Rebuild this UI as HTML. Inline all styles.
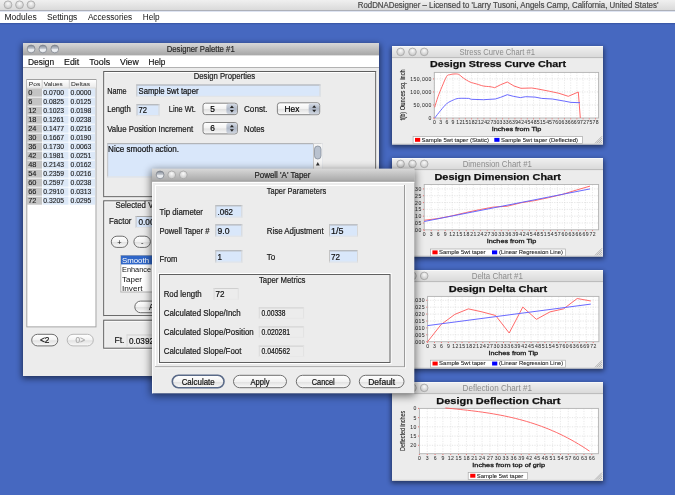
<!DOCTYPE html>
<html><head><meta charset="utf-8"><style>
html,body{margin:0;padding:0;background:#4668c0;overflow:hidden}
svg{display:block;will-change:transform}
text{font-family:"Liberation Sans",sans-serif}
</style></head><body>
<svg width="675" height="495" viewBox="0 0 675 495">
<defs>
<linearGradient id="tbA" x1="0" y1="0" x2="0" y2="1"><stop offset="0" stop-color="#d8d8d8"/><stop offset="1" stop-color="#a9a9a9"/></linearGradient>
<linearGradient id="tbI" x1="0" y1="0" x2="0" y2="1"><stop offset="0" stop-color="#f0f0f0"/><stop offset="1" stop-color="#d9d9d9"/></linearGradient>
<linearGradient id="btn" x1="0" y1="0" x2="0" y2="1"><stop offset="0" stop-color="#ffffff"/><stop offset="0.5" stop-color="#f2f2f2"/><stop offset="0.55" stop-color="#e2e2e2"/><stop offset="1" stop-color="#fafafa"/></linearGradient>
<linearGradient id="hdr" x1="0" y1="0" x2="0" y2="1"><stop offset="0" stop-color="#ffffff"/><stop offset="1" stop-color="#e8e8e8"/></linearGradient>
<radialGradient id="tl" cx="0.5" cy="0.35" r="0.6"><stop offset="0" stop-color="#fafafa"/><stop offset="1" stop-color="#c8c8c8"/></radialGradient>
<radialGradient id="tlG" cx="0.5" cy="0.3" r="0.65"><stop offset="0" stop-color="#f4f6fa"/><stop offset="0.6" stop-color="#aab2c0"/><stop offset="1" stop-color="#7a8394"/></radialGradient>
<linearGradient id="arr" x1="0" y1="0" x2="0" y2="1"><stop offset="0" stop-color="#d6dce6"/><stop offset="0.5" stop-color="#aeb7c6"/><stop offset="1" stop-color="#d0d6e0"/></linearGradient>
<filter id="blur6" x="-20%" y="-20%" width="140%" height="140%"><feGaussianBlur stdDeviation="3"/></filter>
<filter id="blur8" x="-20%" y="-20%" width="140%" height="140%"><feGaussianBlur stdDeviation="4"/></filter>
<filter id="blur5" x="-20%" y="-20%" width="140%" height="140%"><feGaussianBlur stdDeviation="2.5"/></filter>
<linearGradient id="tlA" x1="0" y1="0" x2="0" y2="1"><stop offset="0" stop-color="#7c8491"/><stop offset="0.45" stop-color="#c3c8cf"/><stop offset="0.6" stop-color="#f0f2f5"/><stop offset="1" stop-color="#dde1e6"/></linearGradient>
<linearGradient id="shL" x1="1" y1="0" x2="0" y2="0"><stop offset="0" stop-color="#000" stop-opacity="0.35"/><stop offset="1" stop-color="#000" stop-opacity="0"/></linearGradient>
<linearGradient id="shR" x1="0" y1="0" x2="1" y2="0"><stop offset="0" stop-color="#000" stop-opacity="0.35"/><stop offset="1" stop-color="#000" stop-opacity="0"/></linearGradient>
<linearGradient id="shB" x1="0" y1="0" x2="0" y2="1"><stop offset="0" stop-color="#000" stop-opacity="0.35"/><stop offset="1" stop-color="#000" stop-opacity="0"/></linearGradient>
<linearGradient id="shT" x1="0" y1="1" x2="0" y2="0"><stop offset="0" stop-color="#000" stop-opacity="0.25"/><stop offset="1" stop-color="#000" stop-opacity="0"/></linearGradient>
</defs>
<rect x="0" y="0" width="675" height="495" fill="#4668c0" />
<rect x="0" y="0" width="675" height="10.5" fill="url(#tbI)" />
<line x1="0" y1="10.7" x2="675" y2="10.7" stroke="#b4b4b4" stroke-width="1" />
<rect x="0" y="11.2" width="675" height="11.8" fill="#ffffff" />
<rect x="0" y="23" width="675" height="1.2" fill="#3a58a8" />
<circle cx="8" cy="4.8" r="3.9" fill="url(#tl)" stroke="#a4a4a4" stroke-width="0.8"/>
<circle cx="19.5" cy="4.8" r="3.9" fill="url(#tl)" stroke="#a4a4a4" stroke-width="0.8"/>
<circle cx="31" cy="4.8" r="3.9" fill="url(#tl)" stroke="#a4a4a4" stroke-width="0.8"/>
<text x="357.7" y="8.2" font-size="8.3" fill="#4a4a4a" textLength="300.7" lengthAdjust="spacingAndGlyphs"  stroke="#4a4a4a" stroke-width="0.2">RodDNADesigner – Licensed to &#39;Larry Tusoni, Angels Camp, California, United States&#39;</text>
<text x="4.5" y="19.8" font-size="8.3" fill="#111" textLength="32.3" lengthAdjust="spacingAndGlyphs" >Modules</text>
<text x="46.9" y="19.8" font-size="8.3" fill="#111" textLength="30.4" lengthAdjust="spacingAndGlyphs" >Settings</text>
<text x="87.9" y="19.8" font-size="8.3" fill="#111" textLength="44.3" lengthAdjust="spacingAndGlyphs" >Accessories</text>
<text x="142.8" y="19.8" font-size="8.3" fill="#111" textLength="16.9" lengthAdjust="spacingAndGlyphs" >Help</text>
<rect x="22" y="44.5" width="358" height="334" fill="#000" opacity="0.55" filter="url(#blur6)"/>
<rect x="23" y="43" width="356" height="333" fill="#ececec" />
<rect x="23" y="43" width="356" height="11.5" fill="url(#tbA)" />
<line x1="23" y1="55" x2="379" y2="55" stroke="#8a8a8a" stroke-width="1" />
<rect x="23" y="55.5" width="356" height="11.5" fill="#ffffff" />
<line x1="23" y1="67.5" x2="379" y2="67.5" stroke="#b2b2b2" stroke-width="1" />
<circle cx="31.1" cy="49" r="3.9" fill="url(#tlA)" stroke="#7d838c" stroke-width="0.8"/>
<circle cx="42.9" cy="49" r="3.9" fill="url(#tlA)" stroke="#7d838c" stroke-width="0.8"/>
<circle cx="54.8" cy="49" r="3.9" fill="url(#tlA)" stroke="#7d838c" stroke-width="0.8"/>
<text x="166.7" y="52.1" font-size="8.3" fill="#2a2a2a" textLength="68" lengthAdjust="spacingAndGlyphs"  stroke="#2a2a2a" stroke-width="0.2">Designer Palette #1</text>
<text x="28" y="64.6" font-size="8.5" fill="#111" textLength="26.1" lengthAdjust="spacingAndGlyphs"  stroke="#111" stroke-width="0.15">Design</text>
<text x="64" y="64.6" font-size="8.5" fill="#111" textLength="15.2" lengthAdjust="spacingAndGlyphs"  stroke="#111" stroke-width="0.15">Edit</text>
<text x="89.3" y="64.6" font-size="8.5" fill="#111" textLength="20.8" lengthAdjust="spacingAndGlyphs"  stroke="#111" stroke-width="0.15">Tools</text>
<text x="120" y="64.6" font-size="8.5" fill="#111" textLength="18.7" lengthAdjust="spacingAndGlyphs"  stroke="#111" stroke-width="0.15">View</text>
<text x="148.5" y="64.6" font-size="8.5" fill="#111" textLength="16.8" lengthAdjust="spacingAndGlyphs"  stroke="#111" stroke-width="0.15">Help</text>
<rect x="26.3" y="79" width="70.2" height="248.4" fill="#ffffff" />
<rect x="26.8" y="79.5" width="69.2" height="247.4" fill="none" stroke="#a0a0a0"/>
<rect x="27" y="80" width="69" height="8.3" fill="url(#hdr)" />
<line x1="42.2" y1="80" x2="42.2" y2="88.3" stroke="#cfcfcf" stroke-width="1" />
<line x1="69.3" y1="80" x2="69.3" y2="88.3" stroke="#cfcfcf" stroke-width="1" />
<line x1="27" y1="88.2" x2="96" y2="88.2" stroke="#d4d4d4" stroke-width="1" />
<text x="28.8" y="86.2" font-size="6.0" fill="#222" textLength="11.5" lengthAdjust="spacingAndGlyphs" >Pos</text>
<text x="43.8" y="86.2" font-size="6.0" fill="#222" textLength="19" lengthAdjust="spacingAndGlyphs" >Values</text>
<text x="71" y="86.2" font-size="6.0" fill="#222" textLength="19" lengthAdjust="spacingAndGlyphs" >Deltas</text>
<rect x="27" y="88.6" width="15" height="8.1" fill="#c4c4c4" />
<rect x="42.6" y="88.6" width="26" height="8.1" fill="#dce8f7" />
<rect x="69.6" y="88.6" width="25.6" height="8.1" fill="#dce8f7" />
<text x="28.2" y="95.39999999999999" font-size="7.4" fill="#1a1a1a" stroke="#1a1a1a" stroke-width="0.12">0</text>
<text x="43.3" y="95.39999999999999" font-size="7.4" fill="#1a1a1a" textLength="20.8" lengthAdjust="spacingAndGlyphs" stroke="#1a1a1a" stroke-width="0.12">0.0700</text>
<text x="70.6" y="95.39999999999999" font-size="7.4" fill="#1a1a1a" textLength="20.8" lengthAdjust="spacingAndGlyphs" stroke="#1a1a1a" stroke-width="0.12">0.0000</text>
<rect x="27" y="97.6" width="15" height="8.1" fill="#c4c4c4" />
<rect x="42.6" y="97.6" width="26" height="8.1" fill="#dce8f7" />
<rect x="69.6" y="97.6" width="25.6" height="8.1" fill="#dce8f7" />
<text x="28.2" y="104.39999999999999" font-size="7.4" fill="#1a1a1a" stroke="#1a1a1a" stroke-width="0.12">6</text>
<text x="43.3" y="104.39999999999999" font-size="7.4" fill="#1a1a1a" textLength="20.8" lengthAdjust="spacingAndGlyphs" stroke="#1a1a1a" stroke-width="0.12">0.0825</text>
<text x="70.6" y="104.39999999999999" font-size="7.4" fill="#1a1a1a" textLength="20.8" lengthAdjust="spacingAndGlyphs" stroke="#1a1a1a" stroke-width="0.12">0.0125</text>
<rect x="27" y="106.6" width="15" height="8.1" fill="#c4c4c4" />
<rect x="42.6" y="106.6" width="26" height="8.1" fill="#dce8f7" />
<rect x="69.6" y="106.6" width="25.6" height="8.1" fill="#dce8f7" />
<text x="28.2" y="113.39999999999999" font-size="7.4" fill="#1a1a1a" stroke="#1a1a1a" stroke-width="0.12">12</text>
<text x="43.3" y="113.39999999999999" font-size="7.4" fill="#1a1a1a" textLength="20.8" lengthAdjust="spacingAndGlyphs" stroke="#1a1a1a" stroke-width="0.12">0.1023</text>
<text x="70.6" y="113.39999999999999" font-size="7.4" fill="#1a1a1a" textLength="20.8" lengthAdjust="spacingAndGlyphs" stroke="#1a1a1a" stroke-width="0.12">0.0198</text>
<rect x="27" y="115.6" width="15" height="8.1" fill="#c4c4c4" />
<rect x="42.6" y="115.6" width="26" height="8.1" fill="#dce8f7" />
<rect x="69.6" y="115.6" width="25.6" height="8.1" fill="#dce8f7" />
<text x="28.2" y="122.39999999999999" font-size="7.4" fill="#1a1a1a" stroke="#1a1a1a" stroke-width="0.12">18</text>
<text x="43.3" y="122.39999999999999" font-size="7.4" fill="#1a1a1a" textLength="20.8" lengthAdjust="spacingAndGlyphs" stroke="#1a1a1a" stroke-width="0.12">0.1261</text>
<text x="70.6" y="122.39999999999999" font-size="7.4" fill="#1a1a1a" textLength="20.8" lengthAdjust="spacingAndGlyphs" stroke="#1a1a1a" stroke-width="0.12">0.0238</text>
<rect x="27" y="124.6" width="15" height="8.1" fill="#c4c4c4" />
<rect x="42.6" y="124.6" width="26" height="8.1" fill="#dce8f7" />
<rect x="69.6" y="124.6" width="25.6" height="8.1" fill="#dce8f7" />
<text x="28.2" y="131.4" font-size="7.4" fill="#1a1a1a" stroke="#1a1a1a" stroke-width="0.12">24</text>
<text x="43.3" y="131.4" font-size="7.4" fill="#1a1a1a" textLength="20.8" lengthAdjust="spacingAndGlyphs" stroke="#1a1a1a" stroke-width="0.12">0.1477</text>
<text x="70.6" y="131.4" font-size="7.4" fill="#1a1a1a" textLength="20.8" lengthAdjust="spacingAndGlyphs" stroke="#1a1a1a" stroke-width="0.12">0.0216</text>
<rect x="27" y="133.6" width="15" height="8.1" fill="#c4c4c4" />
<rect x="42.6" y="133.6" width="26" height="8.1" fill="#dce8f7" />
<rect x="69.6" y="133.6" width="25.6" height="8.1" fill="#dce8f7" />
<text x="28.2" y="140.4" font-size="7.4" fill="#1a1a1a" stroke="#1a1a1a" stroke-width="0.12">30</text>
<text x="43.3" y="140.4" font-size="7.4" fill="#1a1a1a" textLength="20.8" lengthAdjust="spacingAndGlyphs" stroke="#1a1a1a" stroke-width="0.12">0.1667</text>
<text x="70.6" y="140.4" font-size="7.4" fill="#1a1a1a" textLength="20.8" lengthAdjust="spacingAndGlyphs" stroke="#1a1a1a" stroke-width="0.12">0.0190</text>
<rect x="27" y="142.6" width="15" height="8.1" fill="#c4c4c4" />
<rect x="42.6" y="142.6" width="26" height="8.1" fill="#dce8f7" />
<rect x="69.6" y="142.6" width="25.6" height="8.1" fill="#dce8f7" />
<text x="28.2" y="149.4" font-size="7.4" fill="#1a1a1a" stroke="#1a1a1a" stroke-width="0.12">36</text>
<text x="43.3" y="149.4" font-size="7.4" fill="#1a1a1a" textLength="20.8" lengthAdjust="spacingAndGlyphs" stroke="#1a1a1a" stroke-width="0.12">0.1730</text>
<text x="70.6" y="149.4" font-size="7.4" fill="#1a1a1a" textLength="20.8" lengthAdjust="spacingAndGlyphs" stroke="#1a1a1a" stroke-width="0.12">0.0063</text>
<rect x="27" y="151.6" width="15" height="8.1" fill="#c4c4c4" />
<rect x="42.6" y="151.6" width="26" height="8.1" fill="#dce8f7" />
<rect x="69.6" y="151.6" width="25.6" height="8.1" fill="#dce8f7" />
<text x="28.2" y="158.4" font-size="7.4" fill="#1a1a1a" stroke="#1a1a1a" stroke-width="0.12">42</text>
<text x="43.3" y="158.4" font-size="7.4" fill="#1a1a1a" textLength="20.8" lengthAdjust="spacingAndGlyphs" stroke="#1a1a1a" stroke-width="0.12">0.1981</text>
<text x="70.6" y="158.4" font-size="7.4" fill="#1a1a1a" textLength="20.8" lengthAdjust="spacingAndGlyphs" stroke="#1a1a1a" stroke-width="0.12">0.0251</text>
<rect x="27" y="160.6" width="15" height="8.1" fill="#c4c4c4" />
<rect x="42.6" y="160.6" width="26" height="8.1" fill="#dce8f7" />
<rect x="69.6" y="160.6" width="25.6" height="8.1" fill="#dce8f7" />
<text x="28.2" y="167.4" font-size="7.4" fill="#1a1a1a" stroke="#1a1a1a" stroke-width="0.12">48</text>
<text x="43.3" y="167.4" font-size="7.4" fill="#1a1a1a" textLength="20.8" lengthAdjust="spacingAndGlyphs" stroke="#1a1a1a" stroke-width="0.12">0.2143</text>
<text x="70.6" y="167.4" font-size="7.4" fill="#1a1a1a" textLength="20.8" lengthAdjust="spacingAndGlyphs" stroke="#1a1a1a" stroke-width="0.12">0.0162</text>
<rect x="27" y="169.6" width="15" height="8.1" fill="#c4c4c4" />
<rect x="42.6" y="169.6" width="26" height="8.1" fill="#dce8f7" />
<rect x="69.6" y="169.6" width="25.6" height="8.1" fill="#dce8f7" />
<text x="28.2" y="176.4" font-size="7.4" fill="#1a1a1a" stroke="#1a1a1a" stroke-width="0.12">54</text>
<text x="43.3" y="176.4" font-size="7.4" fill="#1a1a1a" textLength="20.8" lengthAdjust="spacingAndGlyphs" stroke="#1a1a1a" stroke-width="0.12">0.2359</text>
<text x="70.6" y="176.4" font-size="7.4" fill="#1a1a1a" textLength="20.8" lengthAdjust="spacingAndGlyphs" stroke="#1a1a1a" stroke-width="0.12">0.0216</text>
<rect x="27" y="178.6" width="15" height="8.1" fill="#c4c4c4" />
<rect x="42.6" y="178.6" width="26" height="8.1" fill="#dce8f7" />
<rect x="69.6" y="178.6" width="25.6" height="8.1" fill="#dce8f7" />
<text x="28.2" y="185.4" font-size="7.4" fill="#1a1a1a" stroke="#1a1a1a" stroke-width="0.12">60</text>
<text x="43.3" y="185.4" font-size="7.4" fill="#1a1a1a" textLength="20.8" lengthAdjust="spacingAndGlyphs" stroke="#1a1a1a" stroke-width="0.12">0.2597</text>
<text x="70.6" y="185.4" font-size="7.4" fill="#1a1a1a" textLength="20.8" lengthAdjust="spacingAndGlyphs" stroke="#1a1a1a" stroke-width="0.12">0.0238</text>
<rect x="27" y="187.6" width="15" height="8.1" fill="#c4c4c4" />
<rect x="42.6" y="187.6" width="26" height="8.1" fill="#dce8f7" />
<rect x="69.6" y="187.6" width="25.6" height="8.1" fill="#dce8f7" />
<text x="28.2" y="194.4" font-size="7.4" fill="#1a1a1a" stroke="#1a1a1a" stroke-width="0.12">66</text>
<text x="43.3" y="194.4" font-size="7.4" fill="#1a1a1a" textLength="20.8" lengthAdjust="spacingAndGlyphs" stroke="#1a1a1a" stroke-width="0.12">0.2910</text>
<text x="70.6" y="194.4" font-size="7.4" fill="#1a1a1a" textLength="20.8" lengthAdjust="spacingAndGlyphs" stroke="#1a1a1a" stroke-width="0.12">0.0313</text>
<rect x="27" y="196.6" width="15" height="8.1" fill="#c4c4c4" />
<rect x="42.6" y="196.6" width="26" height="8.1" fill="#dce8f7" />
<rect x="69.6" y="196.6" width="25.6" height="8.1" fill="#dce8f7" />
<text x="28.2" y="203.4" font-size="7.4" fill="#1a1a1a" stroke="#1a1a1a" stroke-width="0.12">72</text>
<text x="43.3" y="203.4" font-size="7.4" fill="#1a1a1a" textLength="20.8" lengthAdjust="spacingAndGlyphs" stroke="#1a1a1a" stroke-width="0.12">0.3205</text>
<text x="70.6" y="203.4" font-size="7.4" fill="#1a1a1a" textLength="20.8" lengthAdjust="spacingAndGlyphs" stroke="#1a1a1a" stroke-width="0.12">0.0295</text>
<rect x="31.7" y="334.3" width="26.1" height="11.6" rx="5.8" fill="url(#btn)" stroke="#6e6e6e" stroke-width="1"/>
<text x="44.75" y="343.3" font-size="8.3" text-anchor="middle" fill="#111"  stroke="#111" stroke-width="0.2">&lt;2</text>
<rect x="67.2" y="334.3" width="26.1" height="11.6" rx="5.8" fill="url(#btn)" stroke="#b8b8b8" stroke-width="1"/>
<text x="80.25" y="343.3" font-size="8.3" text-anchor="middle" fill="#aaaaaa"  stroke="#aaaaaa" stroke-width="0.2">0&gt;</text>
<rect x="104.7" y="72.5" width="272" height="125.2" fill="none" stroke="#ffffff" stroke-width="1"/>
<rect x="103.7" y="71.5" width="272" height="125.2" fill="none" stroke="#5e5e5e" stroke-width="1"/>
<text x="193.7" y="79.3" font-size="8.3" fill="#222" textLength="61.5" lengthAdjust="spacingAndGlyphs"  stroke="#222" stroke-width="0.2">Design Properties</text>
<text x="107.2" y="93.8" font-size="8.3" fill="#1a1a1a" textLength="19.5" lengthAdjust="spacingAndGlyphs"  stroke="#1a1a1a" stroke-width="0.2">Name</text>
<rect x="136.3" y="84.5" width="184.2" height="12.3" fill="#d9e7fa" />
<line x1="136.3" y1="85.0" x2="320.5" y2="85.0" stroke="#a8a8a8" stroke-width="1" />
<line x1="136.8" y1="84.5" x2="136.8" y2="96.8" stroke="#c4c4c4" stroke-width="1" />
<line x1="320.0" y1="84.5" x2="320.0" y2="96.8" stroke="#d8d8d8" stroke-width="1" />
<line x1="136.3" y1="96.3" x2="320.5" y2="96.3" stroke="#e4e4e4" stroke-width="1" />
<text x="138.5" y="93.8" font-size="8.3" fill="#111" textLength="60" lengthAdjust="spacingAndGlyphs"  stroke="#111" stroke-width="0.2">Sample 5wt taper</text>
<text x="107.2" y="112.3" font-size="8.3" fill="#1a1a1a" textLength="23.5" lengthAdjust="spacingAndGlyphs"  stroke="#1a1a1a" stroke-width="0.2">Length</text>
<rect x="136.5" y="104.3" width="23" height="11.8" fill="#d9e7fa" />
<line x1="136.5" y1="104.8" x2="159.5" y2="104.8" stroke="#a8a8a8" stroke-width="1" />
<line x1="137.0" y1="104.3" x2="137.0" y2="116.1" stroke="#c4c4c4" stroke-width="1" />
<line x1="159.0" y1="104.3" x2="159.0" y2="116.1" stroke="#d8d8d8" stroke-width="1" />
<line x1="136.5" y1="115.6" x2="159.5" y2="115.6" stroke="#e4e4e4" stroke-width="1" />
<text x="138.5" y="113.3" font-size="8.3" fill="#111" textLength="8.5" lengthAdjust="spacingAndGlyphs"  stroke="#111" stroke-width="0.2">72</text>
<text x="168.8" y="112.3" font-size="8.3" fill="#1a1a1a" textLength="27" lengthAdjust="spacingAndGlyphs"  stroke="#1a1a1a" stroke-width="0.2">Line Wt.</text>
<rect x="203" y="103.2" width="34.4" height="11.4" rx="2.5" fill="url(#btn)" stroke="#777" stroke-width="0.9"/>
<rect x="226.4" y="103.7" width="10.5" height="10.4" rx="2" fill="url(#arr)"/>
<path d="M229.9 107.9 L233.9 107.9 L231.9 105.4 Z M229.9 109.9 L233.9 109.9 L231.9 112.4 Z" fill="#222"/>
<text x="210.2" y="111.9" font-size="8.3" fill="#000"  stroke="#000" stroke-width="0.2">5</text>
<text x="244" y="112.3" font-size="8.3" fill="#1a1a1a" textLength="23.5" lengthAdjust="spacingAndGlyphs"  stroke="#1a1a1a" stroke-width="0.2">Const.</text>
<rect x="277.4" y="102.8" width="42.3" height="11.9" rx="2.5" fill="url(#btn)" stroke="#777" stroke-width="0.9"/>
<rect x="308.7" y="103.3" width="10.5" height="10.9" rx="2" fill="url(#arr)"/>
<path d="M312.2 107.75 L316.2 107.75 L314.2 105.25 Z M312.2 109.75 L316.2 109.75 L314.2 112.25 Z" fill="#222"/>
<text x="284.59999999999997" y="111.75" font-size="8.3" fill="#000"  stroke="#000" stroke-width="0.2">Hex</text>
<text x="107.2" y="131.5" font-size="8.3" fill="#1a1a1a" textLength="86" lengthAdjust="spacingAndGlyphs"  stroke="#1a1a1a" stroke-width="0.2">Value Position Increment</text>
<rect x="203" y="122.5" width="34.4" height="11.4" rx="2.5" fill="url(#btn)" stroke="#777" stroke-width="0.9"/>
<rect x="226.4" y="123.0" width="10.5" height="10.4" rx="2" fill="url(#arr)"/>
<path d="M229.9 127.19999999999999 L233.9 127.19999999999999 L231.9 124.69999999999999 Z M229.9 129.2 L233.9 129.2 L231.9 131.7 Z" fill="#222"/>
<text x="210.2" y="131.2" font-size="8.3" fill="#000"  stroke="#000" stroke-width="0.2">6</text>
<text x="244" y="131.5" font-size="8.3" fill="#1a1a1a" textLength="20.5" lengthAdjust="spacingAndGlyphs"  stroke="#1a1a1a" stroke-width="0.2">Notes</text>
<rect x="107.2" y="143.2" width="215" height="34.2" fill="#d9e7fa" />
<line x1="107.2" y1="143.7" x2="322.2" y2="143.7" stroke="#a8a8a8" stroke-width="1" />
<line x1="107.7" y1="143.2" x2="107.7" y2="177.39999999999998" stroke="#c4c4c4" stroke-width="1" />
<line x1="321.7" y1="143.2" x2="321.7" y2="177.39999999999998" stroke="#d8d8d8" stroke-width="1" />
<line x1="107.2" y1="176.89999999999998" x2="322.2" y2="176.89999999999998" stroke="#e4e4e4" stroke-width="1" />
<text x="108.1" y="152.2" font-size="8.3" fill="#111" textLength="70.8" lengthAdjust="spacingAndGlyphs"  stroke="#111" stroke-width="0.2">Nice smooth action.</text>
<rect x="313" y="143.5" width="9" height="33" fill="#f4f4f4" />
<line x1="313.5" y1="143.5" x2="313.5" y2="177" stroke="#c8c8c8" stroke-width="1" />
<rect x="314.5" y="146" width="6.5" height="13" rx="3.2" fill="#b9c2cf" stroke="#7d8592" stroke-width="0.7"/>
<path d="M315.9 165.5 L319.7 165.5 L317.8 162 Z" fill="#333"/>
<rect x="104.7" y="201.8" width="103" height="114.8" fill="none" stroke="#ffffff" stroke-width="1"/>
<rect x="103.7" y="200.8" width="103" height="114.8" fill="none" stroke="#5e5e5e" stroke-width="1"/>
<text x="115.5" y="207.9" font-size="8.3" fill="#222" textLength="56" lengthAdjust="spacingAndGlyphs"  stroke="#222" stroke-width="0.2">Selected Values</text>
<text x="109" y="223.8" font-size="8.3" fill="#1a1a1a" textLength="22.5" lengthAdjust="spacingAndGlyphs"  stroke="#1a1a1a" stroke-width="0.2">Factor</text>
<rect x="135.6" y="216" width="40" height="12" fill="#d9e7fa" />
<line x1="135.6" y1="216.5" x2="175.6" y2="216.5" stroke="#a8a8a8" stroke-width="1" />
<line x1="136.1" y1="216" x2="136.1" y2="228" stroke="#c4c4c4" stroke-width="1" />
<line x1="175.1" y1="216" x2="175.1" y2="228" stroke="#d8d8d8" stroke-width="1" />
<line x1="135.6" y1="227.5" x2="175.6" y2="227.5" stroke="#e4e4e4" stroke-width="1" />
<text x="138.5" y="225" font-size="8.3" fill="#111" textLength="16" lengthAdjust="spacingAndGlyphs"  stroke="#111" stroke-width="0.2">0.00</text>
<rect x="111.3" y="236.2" width="16.5" height="11.2" rx="5.6" fill="url(#btn)" stroke="#6e6e6e" stroke-width="1"/>
<text x="119.55" y="244.79999999999998" font-size="7.5" text-anchor="middle" fill="#111" >+</text>
<rect x="133.9" y="236.2" width="16.5" height="11.2" rx="5.6" fill="url(#btn)" stroke="#6e6e6e" stroke-width="1"/>
<text x="142.15" y="244.79999999999998" font-size="7.5" text-anchor="middle" fill="#111" >-</text>
<rect x="120.3" y="255" width="40" height="37" fill="#ffffff" />
<rect x="120.8" y="255.5" width="39" height="36.5" fill="none" stroke="#b0b0b0" stroke-width="1"/>
<rect x="121" y="255.6" width="38" height="8.8" fill="#2f66c8" />
<text x="122" y="262.8" font-size="7.8" fill="#ffffff" textLength="27" lengthAdjust="spacingAndGlyphs" >Smooth</text>
<text x="122" y="272.2" font-size="7.8" fill="#111" textLength="29" lengthAdjust="spacingAndGlyphs" >Enhance</text>
<text x="122" y="281.7" font-size="7.8" fill="#111" textLength="20" lengthAdjust="spacingAndGlyphs" >Taper</text>
<text x="122" y="291.1" font-size="7.8" fill="#111" textLength="20.5" lengthAdjust="spacingAndGlyphs" >Invert</text>
<rect x="134.8" y="301.1" width="47.4" height="11.6" rx="5.8" fill="url(#btn)" stroke="#6e6e6e" stroke-width="1"/>
<text x="158.5" y="310.1" font-size="8.3" text-anchor="middle" fill="#111" textLength="19" lengthAdjust="spacingAndGlyphs"  stroke="#111" stroke-width="0.2">Apply</text>
<rect x="104.7" y="321.2" width="103" height="28" fill="none" stroke="#ffffff" stroke-width="1"/>
<rect x="103.7" y="320.2" width="103" height="28" fill="none" stroke="#5e5e5e" stroke-width="1"/>
<text x="114.5" y="343.2" font-size="8.3" fill="#1a1a1a" textLength="10" lengthAdjust="spacingAndGlyphs"  stroke="#1a1a1a" stroke-width="0.2">Ft.</text>
<rect x="126.6" y="334.5" width="45" height="12.5" fill="#ececec" />
<line x1="126.6" y1="335.0" x2="171.6" y2="335.0" stroke="#cfcfcf" stroke-width="1" />
<line x1="127.1" y1="334.5" x2="127.1" y2="347.0" stroke="#dadada" stroke-width="1" />
<line x1="171.1" y1="334.5" x2="171.1" y2="347.0" stroke="#e2e2e2" stroke-width="1" />
<line x1="126.6" y1="346.5" x2="171.6" y2="346.5" stroke="#e8e8e8" stroke-width="1" />
<text x="129" y="344" font-size="8.3" fill="#111" textLength="25" lengthAdjust="spacingAndGlyphs"  stroke="#111" stroke-width="0.2">0.0392</text>
<rect x="391" y="47.5" width="213" height="99.5" fill="#000" opacity="0.49500000000000005" filter="url(#blur5)"/>
<rect x="392" y="46" width="211" height="98.5" fill="#ececec" />
<rect x="392" y="46" width="211" height="11.5" fill="url(#tbI)" />
<line x1="392" y1="46.5" x2="603" y2="46.5" stroke="#f8f8f8" stroke-width="1" />
<line x1="392" y1="57.6" x2="603" y2="57.6" stroke="#b9b9b9" stroke-width="1" />
<circle cx="400.6" cy="51.9" r="3.8" fill="url(#tl)" stroke="#a4a4a4" stroke-width="0.8"/>
<circle cx="412.5" cy="51.9" r="3.8" fill="url(#tl)" stroke="#a4a4a4" stroke-width="0.8"/>
<circle cx="424.2" cy="51.9" r="3.8" fill="url(#tl)" stroke="#a4a4a4" stroke-width="0.8"/>
<text x="497.3" y="54.7" font-size="8.2" text-anchor="middle" fill="#8c8c8c" textLength="75.6" lengthAdjust="spacingAndGlyphs" >Stress Curve Chart #1</text>
<line x1="600.2" y1="143.5" x2="602" y2="141.7" stroke="#8c8c8c" stroke-width="0.6" />
<line x1="598.4" y1="143.5" x2="602" y2="139.9" stroke="#8c8c8c" stroke-width="0.6" />
<line x1="596.6" y1="143.5" x2="602" y2="138.1" stroke="#8c8c8c" stroke-width="0.6" />
<line x1="594.8" y1="143.5" x2="602" y2="136.3" stroke="#8c8c8c" stroke-width="0.6" />
<line x1="392" y1="144.0" x2="603" y2="144.0" stroke="#d0d0d0" stroke-width="1" />
<text x="430" y="67.4" font-size="9.0" font-weight="bold" fill="#111" textLength="136" lengthAdjust="spacingAndGlyphs" stroke="#111" stroke-width="0.25">Design Stress Curve Chart</text>
<rect x="434.3" y="72.4" width="164.3" height="45.599999999999994" fill="#ffffff" />
<line x1="434.4" y1="72.4" x2="434.4" y2="118" stroke="#dcdcdc" stroke-width="0.6" stroke-dasharray="1.2,1.3"/>
<line x1="440.59499999999997" y1="72.4" x2="440.59499999999997" y2="118" stroke="#dcdcdc" stroke-width="0.6" stroke-dasharray="1.2,1.3"/>
<line x1="446.78999999999996" y1="72.4" x2="446.78999999999996" y2="118" stroke="#dcdcdc" stroke-width="0.6" stroke-dasharray="1.2,1.3"/>
<line x1="452.98499999999996" y1="72.4" x2="452.98499999999996" y2="118" stroke="#dcdcdc" stroke-width="0.6" stroke-dasharray="1.2,1.3"/>
<line x1="459.17999999999995" y1="72.4" x2="459.17999999999995" y2="118" stroke="#dcdcdc" stroke-width="0.6" stroke-dasharray="1.2,1.3"/>
<line x1="465.375" y1="72.4" x2="465.375" y2="118" stroke="#dcdcdc" stroke-width="0.6" stroke-dasharray="1.2,1.3"/>
<line x1="471.57" y1="72.4" x2="471.57" y2="118" stroke="#dcdcdc" stroke-width="0.6" stroke-dasharray="1.2,1.3"/>
<line x1="477.765" y1="72.4" x2="477.765" y2="118" stroke="#dcdcdc" stroke-width="0.6" stroke-dasharray="1.2,1.3"/>
<line x1="483.96" y1="72.4" x2="483.96" y2="118" stroke="#dcdcdc" stroke-width="0.6" stroke-dasharray="1.2,1.3"/>
<line x1="490.155" y1="72.4" x2="490.155" y2="118" stroke="#dcdcdc" stroke-width="0.6" stroke-dasharray="1.2,1.3"/>
<line x1="496.34999999999997" y1="72.4" x2="496.34999999999997" y2="118" stroke="#dcdcdc" stroke-width="0.6" stroke-dasharray="1.2,1.3"/>
<line x1="502.54499999999996" y1="72.4" x2="502.54499999999996" y2="118" stroke="#dcdcdc" stroke-width="0.6" stroke-dasharray="1.2,1.3"/>
<line x1="508.74" y1="72.4" x2="508.74" y2="118" stroke="#dcdcdc" stroke-width="0.6" stroke-dasharray="1.2,1.3"/>
<line x1="514.935" y1="72.4" x2="514.935" y2="118" stroke="#dcdcdc" stroke-width="0.6" stroke-dasharray="1.2,1.3"/>
<line x1="521.13" y1="72.4" x2="521.13" y2="118" stroke="#dcdcdc" stroke-width="0.6" stroke-dasharray="1.2,1.3"/>
<line x1="527.3249999999999" y1="72.4" x2="527.3249999999999" y2="118" stroke="#dcdcdc" stroke-width="0.6" stroke-dasharray="1.2,1.3"/>
<line x1="533.52" y1="72.4" x2="533.52" y2="118" stroke="#dcdcdc" stroke-width="0.6" stroke-dasharray="1.2,1.3"/>
<line x1="539.7149999999999" y1="72.4" x2="539.7149999999999" y2="118" stroke="#dcdcdc" stroke-width="0.6" stroke-dasharray="1.2,1.3"/>
<line x1="545.91" y1="72.4" x2="545.91" y2="118" stroke="#dcdcdc" stroke-width="0.6" stroke-dasharray="1.2,1.3"/>
<line x1="552.105" y1="72.4" x2="552.105" y2="118" stroke="#dcdcdc" stroke-width="0.6" stroke-dasharray="1.2,1.3"/>
<line x1="558.3" y1="72.4" x2="558.3" y2="118" stroke="#dcdcdc" stroke-width="0.6" stroke-dasharray="1.2,1.3"/>
<line x1="564.495" y1="72.4" x2="564.495" y2="118" stroke="#dcdcdc" stroke-width="0.6" stroke-dasharray="1.2,1.3"/>
<line x1="570.6899999999999" y1="72.4" x2="570.6899999999999" y2="118" stroke="#dcdcdc" stroke-width="0.6" stroke-dasharray="1.2,1.3"/>
<line x1="576.885" y1="72.4" x2="576.885" y2="118" stroke="#dcdcdc" stroke-width="0.6" stroke-dasharray="1.2,1.3"/>
<line x1="583.0799999999999" y1="72.4" x2="583.0799999999999" y2="118" stroke="#dcdcdc" stroke-width="0.6" stroke-dasharray="1.2,1.3"/>
<line x1="589.275" y1="72.4" x2="589.275" y2="118" stroke="#dcdcdc" stroke-width="0.6" stroke-dasharray="1.2,1.3"/>
<line x1="595.47" y1="72.4" x2="595.47" y2="118" stroke="#dcdcdc" stroke-width="0.6" stroke-dasharray="1.2,1.3"/>
<line x1="434.3" y1="104.97" x2="598.6" y2="104.97" stroke="#d4d4d4" stroke-width="0.6" stroke-dasharray="1.2,1.3"/>
<line x1="434.3" y1="91.94" x2="598.6" y2="91.94" stroke="#d4d4d4" stroke-width="0.6" stroke-dasharray="1.2,1.3"/>
<line x1="434.3" y1="78.91" x2="598.6" y2="78.91" stroke="#d4d4d4" stroke-width="0.6" stroke-dasharray="1.2,1.3"/>
<rect x="434.3" y="72.4" width="164.3" height="45.599999999999994" fill="none" stroke="#b2b2b2" stroke-width="0.9"/>
<line x1="434.4" y1="118.4" x2="434.4" y2="119.3" stroke="#e86a6a" stroke-width="1" />
<text x="434.65" y="123.9" font-size="5.1" text-anchor="middle" fill="#333" stroke="#333" stroke-width="0.05" letter-spacing="0.45">0</text>
<line x1="440.59499999999997" y1="118.4" x2="440.59499999999997" y2="119.3" stroke="#e86a6a" stroke-width="1" />
<text x="440.84499999999997" y="123.9" font-size="5.1" text-anchor="middle" fill="#333" stroke="#333" stroke-width="0.05" letter-spacing="0.45">3</text>
<line x1="446.78999999999996" y1="118.4" x2="446.78999999999996" y2="119.3" stroke="#e86a6a" stroke-width="1" />
<text x="447.03999999999996" y="123.9" font-size="5.1" text-anchor="middle" fill="#333" stroke="#333" stroke-width="0.05" letter-spacing="0.45">6</text>
<line x1="452.98499999999996" y1="118.4" x2="452.98499999999996" y2="119.3" stroke="#e86a6a" stroke-width="1" />
<text x="453.23499999999996" y="123.9" font-size="5.1" text-anchor="middle" fill="#333" stroke="#333" stroke-width="0.05" letter-spacing="0.45">9</text>
<line x1="459.17999999999995" y1="118.4" x2="459.17999999999995" y2="119.3" stroke="#e86a6a" stroke-width="1" />
<text x="459.42999999999995" y="123.9" font-size="5.1" text-anchor="middle" fill="#333" stroke="#333" stroke-width="0.05" letter-spacing="0.45">12</text>
<line x1="465.375" y1="118.4" x2="465.375" y2="119.3" stroke="#e86a6a" stroke-width="1" />
<text x="465.625" y="123.9" font-size="5.1" text-anchor="middle" fill="#333" stroke="#333" stroke-width="0.05" letter-spacing="0.45">15</text>
<line x1="471.57" y1="118.4" x2="471.57" y2="119.3" stroke="#e86a6a" stroke-width="1" />
<text x="471.82" y="123.9" font-size="5.1" text-anchor="middle" fill="#333" stroke="#333" stroke-width="0.05" letter-spacing="0.45">18</text>
<line x1="477.765" y1="118.4" x2="477.765" y2="119.3" stroke="#e86a6a" stroke-width="1" />
<text x="478.015" y="123.9" font-size="5.1" text-anchor="middle" fill="#333" stroke="#333" stroke-width="0.05" letter-spacing="0.45">21</text>
<line x1="483.96" y1="118.4" x2="483.96" y2="119.3" stroke="#e86a6a" stroke-width="1" />
<text x="484.21" y="123.9" font-size="5.1" text-anchor="middle" fill="#333" stroke="#333" stroke-width="0.05" letter-spacing="0.45">24</text>
<line x1="490.155" y1="118.4" x2="490.155" y2="119.3" stroke="#e86a6a" stroke-width="1" />
<text x="490.405" y="123.9" font-size="5.1" text-anchor="middle" fill="#333" stroke="#333" stroke-width="0.05" letter-spacing="0.45">27</text>
<line x1="496.34999999999997" y1="118.4" x2="496.34999999999997" y2="119.3" stroke="#e86a6a" stroke-width="1" />
<text x="496.59999999999997" y="123.9" font-size="5.1" text-anchor="middle" fill="#333" stroke="#333" stroke-width="0.05" letter-spacing="0.45">30</text>
<line x1="502.54499999999996" y1="118.4" x2="502.54499999999996" y2="119.3" stroke="#e86a6a" stroke-width="1" />
<text x="502.79499999999996" y="123.9" font-size="5.1" text-anchor="middle" fill="#333" stroke="#333" stroke-width="0.05" letter-spacing="0.45">33</text>
<line x1="508.74" y1="118.4" x2="508.74" y2="119.3" stroke="#e86a6a" stroke-width="1" />
<text x="508.99" y="123.9" font-size="5.1" text-anchor="middle" fill="#333" stroke="#333" stroke-width="0.05" letter-spacing="0.45">36</text>
<line x1="514.935" y1="118.4" x2="514.935" y2="119.3" stroke="#e86a6a" stroke-width="1" />
<text x="515.185" y="123.9" font-size="5.1" text-anchor="middle" fill="#333" stroke="#333" stroke-width="0.05" letter-spacing="0.45">39</text>
<line x1="521.13" y1="118.4" x2="521.13" y2="119.3" stroke="#e86a6a" stroke-width="1" />
<text x="521.38" y="123.9" font-size="5.1" text-anchor="middle" fill="#333" stroke="#333" stroke-width="0.05" letter-spacing="0.45">42</text>
<line x1="527.3249999999999" y1="118.4" x2="527.3249999999999" y2="119.3" stroke="#e86a6a" stroke-width="1" />
<text x="527.5749999999999" y="123.9" font-size="5.1" text-anchor="middle" fill="#333" stroke="#333" stroke-width="0.05" letter-spacing="0.45">45</text>
<line x1="533.52" y1="118.4" x2="533.52" y2="119.3" stroke="#e86a6a" stroke-width="1" />
<text x="533.77" y="123.9" font-size="5.1" text-anchor="middle" fill="#333" stroke="#333" stroke-width="0.05" letter-spacing="0.45">48</text>
<line x1="539.7149999999999" y1="118.4" x2="539.7149999999999" y2="119.3" stroke="#e86a6a" stroke-width="1" />
<text x="539.9649999999999" y="123.9" font-size="5.1" text-anchor="middle" fill="#333" stroke="#333" stroke-width="0.05" letter-spacing="0.45">51</text>
<line x1="545.91" y1="118.4" x2="545.91" y2="119.3" stroke="#e86a6a" stroke-width="1" />
<text x="546.16" y="123.9" font-size="5.1" text-anchor="middle" fill="#333" stroke="#333" stroke-width="0.05" letter-spacing="0.45">54</text>
<line x1="552.105" y1="118.4" x2="552.105" y2="119.3" stroke="#e86a6a" stroke-width="1" />
<text x="552.355" y="123.9" font-size="5.1" text-anchor="middle" fill="#333" stroke="#333" stroke-width="0.05" letter-spacing="0.45">57</text>
<line x1="558.3" y1="118.4" x2="558.3" y2="119.3" stroke="#e86a6a" stroke-width="1" />
<text x="558.55" y="123.9" font-size="5.1" text-anchor="middle" fill="#333" stroke="#333" stroke-width="0.05" letter-spacing="0.45">60</text>
<line x1="564.495" y1="118.4" x2="564.495" y2="119.3" stroke="#e86a6a" stroke-width="1" />
<text x="564.745" y="123.9" font-size="5.1" text-anchor="middle" fill="#333" stroke="#333" stroke-width="0.05" letter-spacing="0.45">63</text>
<line x1="570.6899999999999" y1="118.4" x2="570.6899999999999" y2="119.3" stroke="#e86a6a" stroke-width="1" />
<text x="570.9399999999999" y="123.9" font-size="5.1" text-anchor="middle" fill="#333" stroke="#333" stroke-width="0.05" letter-spacing="0.45">66</text>
<line x1="576.885" y1="118.4" x2="576.885" y2="119.3" stroke="#e86a6a" stroke-width="1" />
<text x="577.135" y="123.9" font-size="5.1" text-anchor="middle" fill="#333" stroke="#333" stroke-width="0.05" letter-spacing="0.45">69</text>
<line x1="583.0799999999999" y1="118.4" x2="583.0799999999999" y2="119.3" stroke="#e86a6a" stroke-width="1" />
<text x="583.3299999999999" y="123.9" font-size="5.1" text-anchor="middle" fill="#333" stroke="#333" stroke-width="0.05" letter-spacing="0.45">72</text>
<line x1="589.275" y1="118.4" x2="589.275" y2="119.3" stroke="#e86a6a" stroke-width="1" />
<text x="589.525" y="123.9" font-size="5.1" text-anchor="middle" fill="#333" stroke="#333" stroke-width="0.05" letter-spacing="0.45">75</text>
<line x1="595.47" y1="118.4" x2="595.47" y2="119.3" stroke="#e86a6a" stroke-width="1" />
<text x="595.72" y="123.9" font-size="5.1" text-anchor="middle" fill="#333" stroke="#333" stroke-width="0.05" letter-spacing="0.45">78</text>
<line x1="433.0" y1="118.0" x2="433.90000000000003" y2="118.0" stroke="#e86a6a" stroke-width="1" />
<text x="431.8" y="120.0" font-size="5.1" text-anchor="end" fill="#333" stroke="#333" stroke-width="0.05" letter-spacing="0.45">0</text>
<line x1="433.0" y1="104.97" x2="433.90000000000003" y2="104.97" stroke="#e86a6a" stroke-width="1" />
<text x="431.8" y="106.97" font-size="5.1" text-anchor="end" fill="#333" stroke="#333" stroke-width="0.05" letter-spacing="0.45">50,000</text>
<line x1="433.0" y1="91.94" x2="433.90000000000003" y2="91.94" stroke="#e86a6a" stroke-width="1" />
<text x="431.8" y="93.94" font-size="5.1" text-anchor="end" fill="#333" stroke="#333" stroke-width="0.05" letter-spacing="0.45">100,000</text>
<line x1="433.0" y1="78.91" x2="433.90000000000003" y2="78.91" stroke="#e86a6a" stroke-width="1" />
<text x="431.8" y="80.91" font-size="5.1" text-anchor="end" fill="#333" stroke="#333" stroke-width="0.05" letter-spacing="0.45">150,000</text>
<polyline points="434.70,107.30 435.28,105.38 436.10,102.63 437.05,99.56 438.00,96.70 438.93,94.17 439.91,91.69 440.93,89.21 442.00,86.70 443.16,83.92 444.39,80.97 445.61,78.29 446.70,76.30 447.61,75.26 448.39,74.89 449.16,74.83 450.00,74.70 450.93,74.44 451.91,74.23 452.93,74.08 454.00,74.00 455.13,73.95 456.31,73.93 457.52,74.05 458.70,74.40 459.81,75.07 460.87,75.98 462.00,77.00 463.30,78.00 464.83,79.02 466.52,80.10 468.28,81.13 470.00,82.00 471.68,82.64 473.36,83.12 475.03,83.55 476.70,84.00 478.35,84.53 480.00,85.08 481.65,85.59 483.30,86.00 485.01,86.26 486.77,86.41 488.46,86.53 490.00,86.70 491.43,86.95 492.77,87.24 493.90,87.51 494.70,87.70 500.70,84.70 507.30,82.00 514.00,86.00 521.00,88.30 531.70,88.00 536.30,88.70 549.70,91.30 559.00,93.30 568.30,96.30 578.30,92.00 580.30,118.00" fill="none" stroke="#ff6262" stroke-width="0.95" stroke-linejoin="round"/>
<polyline points="434.70,118.00 435.78,116.61 437.32,114.62 439.06,112.41 440.70,110.40 442.19,108.59 443.66,106.81 445.16,105.14 446.70,103.70 448.34,102.51 450.04,101.53 451.72,100.71 453.30,100.00 454.63,99.41 455.79,98.97 457.05,98.64 458.70,98.40 461.11,98.29 464.04,98.30 466.80,98.36 468.70,98.40 471.30,99.30 483.30,99.70 495.30,99.00 500.70,97.30 507.30,94.70 513.30,96.30 520.30,97.60 525.70,96.70 535.00,97.10 541.70,98.40 552.30,99.00 564.30,101.10 571.00,102.40 580.00,102.70" fill="none" stroke="#6262ff" stroke-width="0.95" stroke-linejoin="round"/>
<text x="404.8" y="94.8" font-size="7.2" fill="#222" stroke="#222" stroke-width="0.1" text-anchor="middle" transform="rotate(-90 404.8 94.8)" textLength="51" lengthAdjust="spacingAndGlyphs">f(b) Ounces sq. inch</text>
<text x="491.7" y="131" font-size="5.8" fill="#222" textLength="49.6" lengthAdjust="spacingAndGlyphs" stroke="#222" stroke-width="0.3">Inches from Tip</text>
<rect x="413.1" y="136.5" width="169.4" height="7" fill="#ffffff" stroke="#a8a8a8" stroke-width="0.7" />
<rect x="415" y="137.9" width="5.2" height="3.9" fill="#ff0000" />
<text x="421.5" y="141.6" font-size="5.4" fill="#222" textLength="67.4" lengthAdjust="spacingAndGlyphs" stroke="#222" stroke-width="0.08">Sample 5wt taper (Static)</text>
<rect x="494.3" y="137.9" width="5.2" height="3.9" fill="#0000ff" />
<text x="501.0" y="141.6" font-size="5.4" fill="#222" textLength="77" lengthAdjust="spacingAndGlyphs" stroke="#222" stroke-width="0.08">Sample 5wt taper (Deflected)</text>
<rect x="391" y="159.5" width="213" height="99.5" fill="#000" opacity="0.49500000000000005" filter="url(#blur5)"/>
<rect x="392" y="158" width="211" height="98.5" fill="#ececec" />
<rect x="392" y="158" width="211" height="11.5" fill="url(#tbI)" />
<line x1="392" y1="158.5" x2="603" y2="158.5" stroke="#f8f8f8" stroke-width="1" />
<line x1="392" y1="169.6" x2="603" y2="169.6" stroke="#b9b9b9" stroke-width="1" />
<circle cx="400.6" cy="163.9" r="3.8" fill="url(#tl)" stroke="#a4a4a4" stroke-width="0.8"/>
<circle cx="412.5" cy="163.9" r="3.8" fill="url(#tl)" stroke="#a4a4a4" stroke-width="0.8"/>
<circle cx="424.2" cy="163.9" r="3.8" fill="url(#tl)" stroke="#a4a4a4" stroke-width="0.8"/>
<text x="497.3" y="166.7" font-size="8.2" text-anchor="middle" fill="#8c8c8c" textLength="69.3" lengthAdjust="spacingAndGlyphs" >Dimension Chart #1</text>
<line x1="600.2" y1="255.5" x2="602" y2="253.7" stroke="#8c8c8c" stroke-width="0.6" />
<line x1="598.4" y1="255.5" x2="602" y2="251.9" stroke="#8c8c8c" stroke-width="0.6" />
<line x1="596.6" y1="255.5" x2="602" y2="250.1" stroke="#8c8c8c" stroke-width="0.6" />
<line x1="594.8" y1="255.5" x2="602" y2="248.3" stroke="#8c8c8c" stroke-width="0.6" />
<line x1="392" y1="256.0" x2="603" y2="256.0" stroke="#d0d0d0" stroke-width="1" />
<text x="434.5" y="179.7" font-size="9.0" font-weight="bold" fill="#111" textLength="126.5" lengthAdjust="spacingAndGlyphs" stroke="#111" stroke-width="0.25">Design Dimension Chart</text>
<rect x="424.2" y="184.5" width="174.40000000000003" height="45.30000000000001" fill="#ffffff" />
<line x1="431.214" y1="184.5" x2="431.214" y2="229.8" stroke="#dcdcdc" stroke-width="0.6" stroke-dasharray="1.2,1.3"/>
<line x1="438.228" y1="184.5" x2="438.228" y2="229.8" stroke="#dcdcdc" stroke-width="0.6" stroke-dasharray="1.2,1.3"/>
<line x1="445.24199999999996" y1="184.5" x2="445.24199999999996" y2="229.8" stroke="#dcdcdc" stroke-width="0.6" stroke-dasharray="1.2,1.3"/>
<line x1="452.256" y1="184.5" x2="452.256" y2="229.8" stroke="#dcdcdc" stroke-width="0.6" stroke-dasharray="1.2,1.3"/>
<line x1="459.27" y1="184.5" x2="459.27" y2="229.8" stroke="#dcdcdc" stroke-width="0.6" stroke-dasharray="1.2,1.3"/>
<line x1="466.284" y1="184.5" x2="466.284" y2="229.8" stroke="#dcdcdc" stroke-width="0.6" stroke-dasharray="1.2,1.3"/>
<line x1="473.298" y1="184.5" x2="473.298" y2="229.8" stroke="#dcdcdc" stroke-width="0.6" stroke-dasharray="1.2,1.3"/>
<line x1="480.312" y1="184.5" x2="480.312" y2="229.8" stroke="#dcdcdc" stroke-width="0.6" stroke-dasharray="1.2,1.3"/>
<line x1="487.326" y1="184.5" x2="487.326" y2="229.8" stroke="#dcdcdc" stroke-width="0.6" stroke-dasharray="1.2,1.3"/>
<line x1="494.34" y1="184.5" x2="494.34" y2="229.8" stroke="#dcdcdc" stroke-width="0.6" stroke-dasharray="1.2,1.3"/>
<line x1="501.354" y1="184.5" x2="501.354" y2="229.8" stroke="#dcdcdc" stroke-width="0.6" stroke-dasharray="1.2,1.3"/>
<line x1="508.368" y1="184.5" x2="508.368" y2="229.8" stroke="#dcdcdc" stroke-width="0.6" stroke-dasharray="1.2,1.3"/>
<line x1="515.382" y1="184.5" x2="515.382" y2="229.8" stroke="#dcdcdc" stroke-width="0.6" stroke-dasharray="1.2,1.3"/>
<line x1="522.396" y1="184.5" x2="522.396" y2="229.8" stroke="#dcdcdc" stroke-width="0.6" stroke-dasharray="1.2,1.3"/>
<line x1="529.41" y1="184.5" x2="529.41" y2="229.8" stroke="#dcdcdc" stroke-width="0.6" stroke-dasharray="1.2,1.3"/>
<line x1="536.424" y1="184.5" x2="536.424" y2="229.8" stroke="#dcdcdc" stroke-width="0.6" stroke-dasharray="1.2,1.3"/>
<line x1="543.438" y1="184.5" x2="543.438" y2="229.8" stroke="#dcdcdc" stroke-width="0.6" stroke-dasharray="1.2,1.3"/>
<line x1="550.452" y1="184.5" x2="550.452" y2="229.8" stroke="#dcdcdc" stroke-width="0.6" stroke-dasharray="1.2,1.3"/>
<line x1="557.466" y1="184.5" x2="557.466" y2="229.8" stroke="#dcdcdc" stroke-width="0.6" stroke-dasharray="1.2,1.3"/>
<line x1="564.48" y1="184.5" x2="564.48" y2="229.8" stroke="#dcdcdc" stroke-width="0.6" stroke-dasharray="1.2,1.3"/>
<line x1="571.494" y1="184.5" x2="571.494" y2="229.8" stroke="#dcdcdc" stroke-width="0.6" stroke-dasharray="1.2,1.3"/>
<line x1="578.508" y1="184.5" x2="578.508" y2="229.8" stroke="#dcdcdc" stroke-width="0.6" stroke-dasharray="1.2,1.3"/>
<line x1="585.5219999999999" y1="184.5" x2="585.5219999999999" y2="229.8" stroke="#dcdcdc" stroke-width="0.6" stroke-dasharray="1.2,1.3"/>
<line x1="592.5360000000001" y1="184.5" x2="592.5360000000001" y2="229.8" stroke="#dcdcdc" stroke-width="0.6" stroke-dasharray="1.2,1.3"/>
<line x1="424.2" y1="222.985" x2="598.6" y2="222.985" stroke="#d4d4d4" stroke-width="0.6" stroke-dasharray="1.2,1.3"/>
<line x1="424.2" y1="216.17000000000002" x2="598.6" y2="216.17000000000002" stroke="#d4d4d4" stroke-width="0.6" stroke-dasharray="1.2,1.3"/>
<line x1="424.2" y1="209.35500000000002" x2="598.6" y2="209.35500000000002" stroke="#d4d4d4" stroke-width="0.6" stroke-dasharray="1.2,1.3"/>
<line x1="424.2" y1="202.54000000000002" x2="598.6" y2="202.54000000000002" stroke="#d4d4d4" stroke-width="0.6" stroke-dasharray="1.2,1.3"/>
<line x1="424.2" y1="195.72500000000002" x2="598.6" y2="195.72500000000002" stroke="#d4d4d4" stroke-width="0.6" stroke-dasharray="1.2,1.3"/>
<line x1="424.2" y1="188.91000000000003" x2="598.6" y2="188.91000000000003" stroke="#d4d4d4" stroke-width="0.6" stroke-dasharray="1.2,1.3"/>
<rect x="424.2" y="184.5" width="174.40000000000003" height="45.30000000000001" fill="none" stroke="#b2b2b2" stroke-width="0.9"/>
<line x1="424.2" y1="230.20000000000002" x2="424.2" y2="231.10000000000002" stroke="#e86a6a" stroke-width="1" />
<text x="424.45" y="235.70000000000002" font-size="5.1" text-anchor="middle" fill="#333" stroke="#333" stroke-width="0.05" letter-spacing="0.45">0</text>
<line x1="431.214" y1="230.20000000000002" x2="431.214" y2="231.10000000000002" stroke="#e86a6a" stroke-width="1" />
<text x="431.464" y="235.70000000000002" font-size="5.1" text-anchor="middle" fill="#333" stroke="#333" stroke-width="0.05" letter-spacing="0.45">3</text>
<line x1="438.228" y1="230.20000000000002" x2="438.228" y2="231.10000000000002" stroke="#e86a6a" stroke-width="1" />
<text x="438.478" y="235.70000000000002" font-size="5.1" text-anchor="middle" fill="#333" stroke="#333" stroke-width="0.05" letter-spacing="0.45">6</text>
<line x1="445.24199999999996" y1="230.20000000000002" x2="445.24199999999996" y2="231.10000000000002" stroke="#e86a6a" stroke-width="1" />
<text x="445.49199999999996" y="235.70000000000002" font-size="5.1" text-anchor="middle" fill="#333" stroke="#333" stroke-width="0.05" letter-spacing="0.45">9</text>
<line x1="452.256" y1="230.20000000000002" x2="452.256" y2="231.10000000000002" stroke="#e86a6a" stroke-width="1" />
<text x="452.506" y="235.70000000000002" font-size="5.1" text-anchor="middle" fill="#333" stroke="#333" stroke-width="0.05" letter-spacing="0.45">12</text>
<line x1="459.27" y1="230.20000000000002" x2="459.27" y2="231.10000000000002" stroke="#e86a6a" stroke-width="1" />
<text x="459.52" y="235.70000000000002" font-size="5.1" text-anchor="middle" fill="#333" stroke="#333" stroke-width="0.05" letter-spacing="0.45">15</text>
<line x1="466.284" y1="230.20000000000002" x2="466.284" y2="231.10000000000002" stroke="#e86a6a" stroke-width="1" />
<text x="466.534" y="235.70000000000002" font-size="5.1" text-anchor="middle" fill="#333" stroke="#333" stroke-width="0.05" letter-spacing="0.45">18</text>
<line x1="473.298" y1="230.20000000000002" x2="473.298" y2="231.10000000000002" stroke="#e86a6a" stroke-width="1" />
<text x="473.548" y="235.70000000000002" font-size="5.1" text-anchor="middle" fill="#333" stroke="#333" stroke-width="0.05" letter-spacing="0.45">21</text>
<line x1="480.312" y1="230.20000000000002" x2="480.312" y2="231.10000000000002" stroke="#e86a6a" stroke-width="1" />
<text x="480.562" y="235.70000000000002" font-size="5.1" text-anchor="middle" fill="#333" stroke="#333" stroke-width="0.05" letter-spacing="0.45">24</text>
<line x1="487.326" y1="230.20000000000002" x2="487.326" y2="231.10000000000002" stroke="#e86a6a" stroke-width="1" />
<text x="487.576" y="235.70000000000002" font-size="5.1" text-anchor="middle" fill="#333" stroke="#333" stroke-width="0.05" letter-spacing="0.45">27</text>
<line x1="494.34" y1="230.20000000000002" x2="494.34" y2="231.10000000000002" stroke="#e86a6a" stroke-width="1" />
<text x="494.59" y="235.70000000000002" font-size="5.1" text-anchor="middle" fill="#333" stroke="#333" stroke-width="0.05" letter-spacing="0.45">30</text>
<line x1="501.354" y1="230.20000000000002" x2="501.354" y2="231.10000000000002" stroke="#e86a6a" stroke-width="1" />
<text x="501.604" y="235.70000000000002" font-size="5.1" text-anchor="middle" fill="#333" stroke="#333" stroke-width="0.05" letter-spacing="0.45">33</text>
<line x1="508.368" y1="230.20000000000002" x2="508.368" y2="231.10000000000002" stroke="#e86a6a" stroke-width="1" />
<text x="508.618" y="235.70000000000002" font-size="5.1" text-anchor="middle" fill="#333" stroke="#333" stroke-width="0.05" letter-spacing="0.45">36</text>
<line x1="515.382" y1="230.20000000000002" x2="515.382" y2="231.10000000000002" stroke="#e86a6a" stroke-width="1" />
<text x="515.632" y="235.70000000000002" font-size="5.1" text-anchor="middle" fill="#333" stroke="#333" stroke-width="0.05" letter-spacing="0.45">39</text>
<line x1="522.396" y1="230.20000000000002" x2="522.396" y2="231.10000000000002" stroke="#e86a6a" stroke-width="1" />
<text x="522.646" y="235.70000000000002" font-size="5.1" text-anchor="middle" fill="#333" stroke="#333" stroke-width="0.05" letter-spacing="0.45">42</text>
<line x1="529.41" y1="230.20000000000002" x2="529.41" y2="231.10000000000002" stroke="#e86a6a" stroke-width="1" />
<text x="529.66" y="235.70000000000002" font-size="5.1" text-anchor="middle" fill="#333" stroke="#333" stroke-width="0.05" letter-spacing="0.45">45</text>
<line x1="536.424" y1="230.20000000000002" x2="536.424" y2="231.10000000000002" stroke="#e86a6a" stroke-width="1" />
<text x="536.674" y="235.70000000000002" font-size="5.1" text-anchor="middle" fill="#333" stroke="#333" stroke-width="0.05" letter-spacing="0.45">48</text>
<line x1="543.438" y1="230.20000000000002" x2="543.438" y2="231.10000000000002" stroke="#e86a6a" stroke-width="1" />
<text x="543.688" y="235.70000000000002" font-size="5.1" text-anchor="middle" fill="#333" stroke="#333" stroke-width="0.05" letter-spacing="0.45">51</text>
<line x1="550.452" y1="230.20000000000002" x2="550.452" y2="231.10000000000002" stroke="#e86a6a" stroke-width="1" />
<text x="550.702" y="235.70000000000002" font-size="5.1" text-anchor="middle" fill="#333" stroke="#333" stroke-width="0.05" letter-spacing="0.45">54</text>
<line x1="557.466" y1="230.20000000000002" x2="557.466" y2="231.10000000000002" stroke="#e86a6a" stroke-width="1" />
<text x="557.716" y="235.70000000000002" font-size="5.1" text-anchor="middle" fill="#333" stroke="#333" stroke-width="0.05" letter-spacing="0.45">57</text>
<line x1="564.48" y1="230.20000000000002" x2="564.48" y2="231.10000000000002" stroke="#e86a6a" stroke-width="1" />
<text x="564.73" y="235.70000000000002" font-size="5.1" text-anchor="middle" fill="#333" stroke="#333" stroke-width="0.05" letter-spacing="0.45">60</text>
<line x1="571.494" y1="230.20000000000002" x2="571.494" y2="231.10000000000002" stroke="#e86a6a" stroke-width="1" />
<text x="571.744" y="235.70000000000002" font-size="5.1" text-anchor="middle" fill="#333" stroke="#333" stroke-width="0.05" letter-spacing="0.45">63</text>
<line x1="578.508" y1="230.20000000000002" x2="578.508" y2="231.10000000000002" stroke="#e86a6a" stroke-width="1" />
<text x="578.758" y="235.70000000000002" font-size="5.1" text-anchor="middle" fill="#333" stroke="#333" stroke-width="0.05" letter-spacing="0.45">66</text>
<line x1="585.5219999999999" y1="230.20000000000002" x2="585.5219999999999" y2="231.10000000000002" stroke="#e86a6a" stroke-width="1" />
<text x="585.7719999999999" y="235.70000000000002" font-size="5.1" text-anchor="middle" fill="#333" stroke="#333" stroke-width="0.05" letter-spacing="0.45">69</text>
<line x1="592.5360000000001" y1="230.20000000000002" x2="592.5360000000001" y2="231.10000000000002" stroke="#e86a6a" stroke-width="1" />
<text x="592.7860000000001" y="235.70000000000002" font-size="5.1" text-anchor="middle" fill="#333" stroke="#333" stroke-width="0.05" letter-spacing="0.45">72</text>
<line x1="422.9" y1="229.8" x2="423.8" y2="229.8" stroke="#e86a6a" stroke-width="1" />
<text x="421.7" y="231.8" font-size="5.1" text-anchor="end" fill="#333" stroke="#333" stroke-width="0.05" letter-spacing="0.45">0.00</text>
<line x1="422.9" y1="222.985" x2="423.8" y2="222.985" stroke="#e86a6a" stroke-width="1" />
<text x="421.7" y="224.985" font-size="5.1" text-anchor="end" fill="#333" stroke="#333" stroke-width="0.05" letter-spacing="0.45">0.05</text>
<line x1="422.9" y1="216.17000000000002" x2="423.8" y2="216.17000000000002" stroke="#e86a6a" stroke-width="1" />
<text x="421.7" y="218.17000000000002" font-size="5.1" text-anchor="end" fill="#333" stroke="#333" stroke-width="0.05" letter-spacing="0.45">0.10</text>
<line x1="422.9" y1="209.35500000000002" x2="423.8" y2="209.35500000000002" stroke="#e86a6a" stroke-width="1" />
<text x="421.7" y="211.35500000000002" font-size="5.1" text-anchor="end" fill="#333" stroke="#333" stroke-width="0.05" letter-spacing="0.45">0.15</text>
<line x1="422.9" y1="202.54000000000002" x2="423.8" y2="202.54000000000002" stroke="#e86a6a" stroke-width="1" />
<text x="421.7" y="204.54000000000002" font-size="5.1" text-anchor="end" fill="#333" stroke="#333" stroke-width="0.05" letter-spacing="0.45">0.20</text>
<line x1="422.9" y1="195.72500000000002" x2="423.8" y2="195.72500000000002" stroke="#e86a6a" stroke-width="1" />
<text x="421.7" y="197.72500000000002" font-size="5.1" text-anchor="end" fill="#333" stroke="#333" stroke-width="0.05" letter-spacing="0.45">0.25</text>
<line x1="422.9" y1="188.91000000000003" x2="423.8" y2="188.91000000000003" stroke="#e86a6a" stroke-width="1" />
<text x="421.7" y="190.91000000000003" font-size="5.1" text-anchor="end" fill="#333" stroke="#333" stroke-width="0.05" letter-spacing="0.45">0.30</text>
<polyline points="424.20,220.26 438.02,218.56 451.83,215.86 465.65,212.61 479.47,209.67 493.28,207.08 507.10,206.22 520.92,202.80 534.73,200.59 548.55,197.65 562.37,194.40 576.18,190.14 590.00,186.12" fill="none" stroke="#ff6262" stroke-width="0.95" stroke-linejoin="round"/>
<polyline points="424.20,221.49 590.00,188.91" fill="none" stroke="#6262ff" stroke-width="0.95" stroke-linejoin="round"/>
<text x="486.7" y="243" font-size="5.8" fill="#222" textLength="49.6" lengthAdjust="spacingAndGlyphs" stroke="#222" stroke-width="0.3">Inches from Tip</text>
<rect x="430.4" y="249" width="135.1" height="7" fill="#ffffff" stroke="#a8a8a8" stroke-width="0.7" />
<rect x="432.4" y="250.4" width="5.2" height="3.9" fill="#ff0000" />
<text x="439.0" y="254.1" font-size="5.4" fill="#222" textLength="46.5" lengthAdjust="spacingAndGlyphs" stroke="#222" stroke-width="0.08">Sample 5wt taper</text>
<rect x="492" y="250.4" width="5.2" height="3.9" fill="#0000ff" />
<text x="499.0" y="254.1" font-size="5.4" fill="#222" textLength="64" lengthAdjust="spacingAndGlyphs" stroke="#222" stroke-width="0.08">(Linear Regression Line)</text>
<rect x="391" y="271.5" width="213" height="99.5" fill="#000" opacity="0.49500000000000005" filter="url(#blur5)"/>
<rect x="392" y="270" width="211" height="98.5" fill="#ececec" />
<rect x="392" y="270" width="211" height="11.5" fill="url(#tbI)" />
<line x1="392" y1="270.5" x2="603" y2="270.5" stroke="#f8f8f8" stroke-width="1" />
<line x1="392" y1="281.6" x2="603" y2="281.6" stroke="#b9b9b9" stroke-width="1" />
<circle cx="400.6" cy="275.9" r="3.8" fill="url(#tl)" stroke="#a4a4a4" stroke-width="0.8"/>
<circle cx="412.5" cy="275.9" r="3.8" fill="url(#tl)" stroke="#a4a4a4" stroke-width="0.8"/>
<circle cx="424.2" cy="275.9" r="3.8" fill="url(#tl)" stroke="#a4a4a4" stroke-width="0.8"/>
<text x="497.3" y="278.7" font-size="8.2" text-anchor="middle" fill="#8c8c8c" textLength="51.2" lengthAdjust="spacingAndGlyphs" >Delta Chart #1</text>
<line x1="600.2" y1="367.5" x2="602" y2="365.7" stroke="#8c8c8c" stroke-width="0.6" />
<line x1="598.4" y1="367.5" x2="602" y2="363.9" stroke="#8c8c8c" stroke-width="0.6" />
<line x1="596.6" y1="367.5" x2="602" y2="362.1" stroke="#8c8c8c" stroke-width="0.6" />
<line x1="594.8" y1="367.5" x2="602" y2="360.3" stroke="#8c8c8c" stroke-width="0.6" />
<line x1="392" y1="368.0" x2="603" y2="368.0" stroke="#d0d0d0" stroke-width="1" />
<text x="448.7" y="291.8" font-size="9.0" font-weight="bold" fill="#111" textLength="98.6" lengthAdjust="spacingAndGlyphs" stroke="#111" stroke-width="0.25">Design Delta Chart</text>
<rect x="427.6" y="296.4" width="171.29999999999995" height="45.30000000000001" fill="#ffffff" />
<line x1="434.5" y1="296.4" x2="434.5" y2="341.7" stroke="#dcdcdc" stroke-width="0.6" stroke-dasharray="1.2,1.3"/>
<line x1="441.40000000000003" y1="296.4" x2="441.40000000000003" y2="341.7" stroke="#dcdcdc" stroke-width="0.6" stroke-dasharray="1.2,1.3"/>
<line x1="448.3" y1="296.4" x2="448.3" y2="341.7" stroke="#dcdcdc" stroke-width="0.6" stroke-dasharray="1.2,1.3"/>
<line x1="455.20000000000005" y1="296.4" x2="455.20000000000005" y2="341.7" stroke="#dcdcdc" stroke-width="0.6" stroke-dasharray="1.2,1.3"/>
<line x1="462.1" y1="296.4" x2="462.1" y2="341.7" stroke="#dcdcdc" stroke-width="0.6" stroke-dasharray="1.2,1.3"/>
<line x1="469.0" y1="296.4" x2="469.0" y2="341.7" stroke="#dcdcdc" stroke-width="0.6" stroke-dasharray="1.2,1.3"/>
<line x1="475.90000000000003" y1="296.4" x2="475.90000000000003" y2="341.7" stroke="#dcdcdc" stroke-width="0.6" stroke-dasharray="1.2,1.3"/>
<line x1="482.8" y1="296.4" x2="482.8" y2="341.7" stroke="#dcdcdc" stroke-width="0.6" stroke-dasharray="1.2,1.3"/>
<line x1="489.70000000000005" y1="296.4" x2="489.70000000000005" y2="341.7" stroke="#dcdcdc" stroke-width="0.6" stroke-dasharray="1.2,1.3"/>
<line x1="496.6" y1="296.4" x2="496.6" y2="341.7" stroke="#dcdcdc" stroke-width="0.6" stroke-dasharray="1.2,1.3"/>
<line x1="503.5" y1="296.4" x2="503.5" y2="341.7" stroke="#dcdcdc" stroke-width="0.6" stroke-dasharray="1.2,1.3"/>
<line x1="510.40000000000003" y1="296.4" x2="510.40000000000003" y2="341.7" stroke="#dcdcdc" stroke-width="0.6" stroke-dasharray="1.2,1.3"/>
<line x1="517.3" y1="296.4" x2="517.3" y2="341.7" stroke="#dcdcdc" stroke-width="0.6" stroke-dasharray="1.2,1.3"/>
<line x1="524.2" y1="296.4" x2="524.2" y2="341.7" stroke="#dcdcdc" stroke-width="0.6" stroke-dasharray="1.2,1.3"/>
<line x1="531.1" y1="296.4" x2="531.1" y2="341.7" stroke="#dcdcdc" stroke-width="0.6" stroke-dasharray="1.2,1.3"/>
<line x1="538.0" y1="296.4" x2="538.0" y2="341.7" stroke="#dcdcdc" stroke-width="0.6" stroke-dasharray="1.2,1.3"/>
<line x1="544.9" y1="296.4" x2="544.9" y2="341.7" stroke="#dcdcdc" stroke-width="0.6" stroke-dasharray="1.2,1.3"/>
<line x1="551.8" y1="296.4" x2="551.8" y2="341.7" stroke="#dcdcdc" stroke-width="0.6" stroke-dasharray="1.2,1.3"/>
<line x1="558.7" y1="296.4" x2="558.7" y2="341.7" stroke="#dcdcdc" stroke-width="0.6" stroke-dasharray="1.2,1.3"/>
<line x1="565.6" y1="296.4" x2="565.6" y2="341.7" stroke="#dcdcdc" stroke-width="0.6" stroke-dasharray="1.2,1.3"/>
<line x1="572.5" y1="296.4" x2="572.5" y2="341.7" stroke="#dcdcdc" stroke-width="0.6" stroke-dasharray="1.2,1.3"/>
<line x1="579.4" y1="296.4" x2="579.4" y2="341.7" stroke="#dcdcdc" stroke-width="0.6" stroke-dasharray="1.2,1.3"/>
<line x1="586.3" y1="296.4" x2="586.3" y2="341.7" stroke="#dcdcdc" stroke-width="0.6" stroke-dasharray="1.2,1.3"/>
<line x1="593.2" y1="296.4" x2="593.2" y2="341.7" stroke="#dcdcdc" stroke-width="0.6" stroke-dasharray="1.2,1.3"/>
<line x1="427.6" y1="334.8" x2="598.9" y2="334.8" stroke="#d4d4d4" stroke-width="0.6" stroke-dasharray="1.2,1.3"/>
<line x1="427.6" y1="327.9" x2="598.9" y2="327.9" stroke="#d4d4d4" stroke-width="0.6" stroke-dasharray="1.2,1.3"/>
<line x1="427.6" y1="321.0" x2="598.9" y2="321.0" stroke="#d4d4d4" stroke-width="0.6" stroke-dasharray="1.2,1.3"/>
<line x1="427.6" y1="314.09999999999997" x2="598.9" y2="314.09999999999997" stroke="#d4d4d4" stroke-width="0.6" stroke-dasharray="1.2,1.3"/>
<line x1="427.6" y1="307.2" x2="598.9" y2="307.2" stroke="#d4d4d4" stroke-width="0.6" stroke-dasharray="1.2,1.3"/>
<line x1="427.6" y1="300.3" x2="598.9" y2="300.3" stroke="#d4d4d4" stroke-width="0.6" stroke-dasharray="1.2,1.3"/>
<rect x="427.6" y="296.4" width="171.29999999999995" height="45.30000000000001" fill="none" stroke="#b2b2b2" stroke-width="0.9"/>
<line x1="427.6" y1="342.09999999999997" x2="427.6" y2="343.0" stroke="#e86a6a" stroke-width="1" />
<text x="427.85" y="347.59999999999997" font-size="5.1" text-anchor="middle" fill="#333" stroke="#333" stroke-width="0.05" letter-spacing="0.45">0</text>
<line x1="434.5" y1="342.09999999999997" x2="434.5" y2="343.0" stroke="#e86a6a" stroke-width="1" />
<text x="434.75" y="347.59999999999997" font-size="5.1" text-anchor="middle" fill="#333" stroke="#333" stroke-width="0.05" letter-spacing="0.45">3</text>
<line x1="441.40000000000003" y1="342.09999999999997" x2="441.40000000000003" y2="343.0" stroke="#e86a6a" stroke-width="1" />
<text x="441.65000000000003" y="347.59999999999997" font-size="5.1" text-anchor="middle" fill="#333" stroke="#333" stroke-width="0.05" letter-spacing="0.45">6</text>
<line x1="448.3" y1="342.09999999999997" x2="448.3" y2="343.0" stroke="#e86a6a" stroke-width="1" />
<text x="448.55" y="347.59999999999997" font-size="5.1" text-anchor="middle" fill="#333" stroke="#333" stroke-width="0.05" letter-spacing="0.45">9</text>
<line x1="455.20000000000005" y1="342.09999999999997" x2="455.20000000000005" y2="343.0" stroke="#e86a6a" stroke-width="1" />
<text x="455.45000000000005" y="347.59999999999997" font-size="5.1" text-anchor="middle" fill="#333" stroke="#333" stroke-width="0.05" letter-spacing="0.45">12</text>
<line x1="462.1" y1="342.09999999999997" x2="462.1" y2="343.0" stroke="#e86a6a" stroke-width="1" />
<text x="462.35" y="347.59999999999997" font-size="5.1" text-anchor="middle" fill="#333" stroke="#333" stroke-width="0.05" letter-spacing="0.45">15</text>
<line x1="469.0" y1="342.09999999999997" x2="469.0" y2="343.0" stroke="#e86a6a" stroke-width="1" />
<text x="469.25" y="347.59999999999997" font-size="5.1" text-anchor="middle" fill="#333" stroke="#333" stroke-width="0.05" letter-spacing="0.45">18</text>
<line x1="475.90000000000003" y1="342.09999999999997" x2="475.90000000000003" y2="343.0" stroke="#e86a6a" stroke-width="1" />
<text x="476.15000000000003" y="347.59999999999997" font-size="5.1" text-anchor="middle" fill="#333" stroke="#333" stroke-width="0.05" letter-spacing="0.45">21</text>
<line x1="482.8" y1="342.09999999999997" x2="482.8" y2="343.0" stroke="#e86a6a" stroke-width="1" />
<text x="483.05" y="347.59999999999997" font-size="5.1" text-anchor="middle" fill="#333" stroke="#333" stroke-width="0.05" letter-spacing="0.45">24</text>
<line x1="489.70000000000005" y1="342.09999999999997" x2="489.70000000000005" y2="343.0" stroke="#e86a6a" stroke-width="1" />
<text x="489.95000000000005" y="347.59999999999997" font-size="5.1" text-anchor="middle" fill="#333" stroke="#333" stroke-width="0.05" letter-spacing="0.45">27</text>
<line x1="496.6" y1="342.09999999999997" x2="496.6" y2="343.0" stroke="#e86a6a" stroke-width="1" />
<text x="496.85" y="347.59999999999997" font-size="5.1" text-anchor="middle" fill="#333" stroke="#333" stroke-width="0.05" letter-spacing="0.45">30</text>
<line x1="503.5" y1="342.09999999999997" x2="503.5" y2="343.0" stroke="#e86a6a" stroke-width="1" />
<text x="503.75" y="347.59999999999997" font-size="5.1" text-anchor="middle" fill="#333" stroke="#333" stroke-width="0.05" letter-spacing="0.45">33</text>
<line x1="510.40000000000003" y1="342.09999999999997" x2="510.40000000000003" y2="343.0" stroke="#e86a6a" stroke-width="1" />
<text x="510.65000000000003" y="347.59999999999997" font-size="5.1" text-anchor="middle" fill="#333" stroke="#333" stroke-width="0.05" letter-spacing="0.45">36</text>
<line x1="517.3" y1="342.09999999999997" x2="517.3" y2="343.0" stroke="#e86a6a" stroke-width="1" />
<text x="517.55" y="347.59999999999997" font-size="5.1" text-anchor="middle" fill="#333" stroke="#333" stroke-width="0.05" letter-spacing="0.45">39</text>
<line x1="524.2" y1="342.09999999999997" x2="524.2" y2="343.0" stroke="#e86a6a" stroke-width="1" />
<text x="524.45" y="347.59999999999997" font-size="5.1" text-anchor="middle" fill="#333" stroke="#333" stroke-width="0.05" letter-spacing="0.45">42</text>
<line x1="531.1" y1="342.09999999999997" x2="531.1" y2="343.0" stroke="#e86a6a" stroke-width="1" />
<text x="531.35" y="347.59999999999997" font-size="5.1" text-anchor="middle" fill="#333" stroke="#333" stroke-width="0.05" letter-spacing="0.45">45</text>
<line x1="538.0" y1="342.09999999999997" x2="538.0" y2="343.0" stroke="#e86a6a" stroke-width="1" />
<text x="538.25" y="347.59999999999997" font-size="5.1" text-anchor="middle" fill="#333" stroke="#333" stroke-width="0.05" letter-spacing="0.45">48</text>
<line x1="544.9" y1="342.09999999999997" x2="544.9" y2="343.0" stroke="#e86a6a" stroke-width="1" />
<text x="545.15" y="347.59999999999997" font-size="5.1" text-anchor="middle" fill="#333" stroke="#333" stroke-width="0.05" letter-spacing="0.45">51</text>
<line x1="551.8" y1="342.09999999999997" x2="551.8" y2="343.0" stroke="#e86a6a" stroke-width="1" />
<text x="552.05" y="347.59999999999997" font-size="5.1" text-anchor="middle" fill="#333" stroke="#333" stroke-width="0.05" letter-spacing="0.45">54</text>
<line x1="558.7" y1="342.09999999999997" x2="558.7" y2="343.0" stroke="#e86a6a" stroke-width="1" />
<text x="558.95" y="347.59999999999997" font-size="5.1" text-anchor="middle" fill="#333" stroke="#333" stroke-width="0.05" letter-spacing="0.45">57</text>
<line x1="565.6" y1="342.09999999999997" x2="565.6" y2="343.0" stroke="#e86a6a" stroke-width="1" />
<text x="565.85" y="347.59999999999997" font-size="5.1" text-anchor="middle" fill="#333" stroke="#333" stroke-width="0.05" letter-spacing="0.45">60</text>
<line x1="572.5" y1="342.09999999999997" x2="572.5" y2="343.0" stroke="#e86a6a" stroke-width="1" />
<text x="572.75" y="347.59999999999997" font-size="5.1" text-anchor="middle" fill="#333" stroke="#333" stroke-width="0.05" letter-spacing="0.45">63</text>
<line x1="579.4" y1="342.09999999999997" x2="579.4" y2="343.0" stroke="#e86a6a" stroke-width="1" />
<text x="579.65" y="347.59999999999997" font-size="5.1" text-anchor="middle" fill="#333" stroke="#333" stroke-width="0.05" letter-spacing="0.45">66</text>
<line x1="586.3" y1="342.09999999999997" x2="586.3" y2="343.0" stroke="#e86a6a" stroke-width="1" />
<text x="586.55" y="347.59999999999997" font-size="5.1" text-anchor="middle" fill="#333" stroke="#333" stroke-width="0.05" letter-spacing="0.45">69</text>
<line x1="593.2" y1="342.09999999999997" x2="593.2" y2="343.0" stroke="#e86a6a" stroke-width="1" />
<text x="593.45" y="347.59999999999997" font-size="5.1" text-anchor="middle" fill="#333" stroke="#333" stroke-width="0.05" letter-spacing="0.45">72</text>
<line x1="426.3" y1="341.7" x2="427.20000000000005" y2="341.7" stroke="#e86a6a" stroke-width="1" />
<text x="425.1" y="343.7" font-size="5.1" text-anchor="end" fill="#333" stroke="#333" stroke-width="0.05" letter-spacing="0.45">0.000</text>
<line x1="426.3" y1="334.8" x2="427.20000000000005" y2="334.8" stroke="#e86a6a" stroke-width="1" />
<text x="425.1" y="336.8" font-size="5.1" text-anchor="end" fill="#333" stroke="#333" stroke-width="0.05" letter-spacing="0.45">0.005</text>
<line x1="426.3" y1="327.9" x2="427.20000000000005" y2="327.9" stroke="#e86a6a" stroke-width="1" />
<text x="425.1" y="329.9" font-size="5.1" text-anchor="end" fill="#333" stroke="#333" stroke-width="0.05" letter-spacing="0.45">0.010</text>
<line x1="426.3" y1="321.0" x2="427.20000000000005" y2="321.0" stroke="#e86a6a" stroke-width="1" />
<text x="425.1" y="323.0" font-size="5.1" text-anchor="end" fill="#333" stroke="#333" stroke-width="0.05" letter-spacing="0.45">0.015</text>
<line x1="426.3" y1="314.09999999999997" x2="427.20000000000005" y2="314.09999999999997" stroke="#e86a6a" stroke-width="1" />
<text x="425.1" y="316.09999999999997" font-size="5.1" text-anchor="end" fill="#333" stroke="#333" stroke-width="0.05" letter-spacing="0.45">0.020</text>
<line x1="426.3" y1="307.2" x2="427.20000000000005" y2="307.2" stroke="#e86a6a" stroke-width="1" />
<text x="425.1" y="309.2" font-size="5.1" text-anchor="end" fill="#333" stroke="#333" stroke-width="0.05" letter-spacing="0.45">0.025</text>
<line x1="426.3" y1="300.3" x2="427.20000000000005" y2="300.3" stroke="#e86a6a" stroke-width="1" />
<text x="425.1" y="302.3" font-size="5.1" text-anchor="end" fill="#333" stroke="#333" stroke-width="0.05" letter-spacing="0.45">0.030</text>
<polyline points="427.60,341.70 441.20,324.45 454.80,314.38 468.40,308.86 482.00,311.89 495.60,315.48 509.20,333.01 522.80,307.06 536.40,319.34 550.00,311.89 563.60,308.86 577.20,298.51 590.80,300.99" fill="none" stroke="#ff6262" stroke-width="0.95" stroke-linejoin="round"/>
<polyline points="427.60,325.60 590.80,304.10" fill="none" stroke="#6262ff" stroke-width="0.95" stroke-linejoin="round"/>
<text x="488.5" y="355" font-size="5.8" fill="#222" textLength="49.6" lengthAdjust="spacingAndGlyphs" stroke="#222" stroke-width="0.3">Inches from Tip</text>
<rect x="430.5" y="360.2" width="135" height="7" fill="#ffffff" stroke="#a8a8a8" stroke-width="0.7" />
<rect x="432.5" y="361.59999999999997" width="5.2" height="3.9" fill="#ff0000" />
<text x="439.1" y="365.3" font-size="5.4" fill="#222" textLength="46.5" lengthAdjust="spacingAndGlyphs" stroke="#222" stroke-width="0.08">Sample 5wt taper</text>
<rect x="492.1" y="361.59999999999997" width="5.2" height="3.9" fill="#0000ff" />
<text x="499.1" y="365.3" font-size="5.4" fill="#222" textLength="64" lengthAdjust="spacingAndGlyphs" stroke="#222" stroke-width="0.08">(Linear Regression Line)</text>
<rect x="391" y="383.5" width="213" height="99.8" fill="#000" opacity="0.49500000000000005" filter="url(#blur5)"/>
<rect x="392" y="382" width="211" height="98.8" fill="#ececec" />
<rect x="392" y="382" width="211" height="11.5" fill="url(#tbI)" />
<line x1="392" y1="382.5" x2="603" y2="382.5" stroke="#f8f8f8" stroke-width="1" />
<line x1="392" y1="393.6" x2="603" y2="393.6" stroke="#b9b9b9" stroke-width="1" />
<circle cx="400.6" cy="387.9" r="3.8" fill="url(#tl)" stroke="#a4a4a4" stroke-width="0.8"/>
<circle cx="412.5" cy="387.9" r="3.8" fill="url(#tl)" stroke="#a4a4a4" stroke-width="0.8"/>
<circle cx="424.2" cy="387.9" r="3.8" fill="url(#tl)" stroke="#a4a4a4" stroke-width="0.8"/>
<text x="497.3" y="390.7" font-size="8.2" text-anchor="middle" fill="#8c8c8c" textLength="69.4" lengthAdjust="spacingAndGlyphs" >Deflection Chart #1</text>
<line x1="600.2" y1="479.8" x2="602" y2="478.0" stroke="#8c8c8c" stroke-width="0.6" />
<line x1="598.4" y1="479.8" x2="602" y2="476.2" stroke="#8c8c8c" stroke-width="0.6" />
<line x1="596.6" y1="479.8" x2="602" y2="474.40000000000003" stroke="#8c8c8c" stroke-width="0.6" />
<line x1="594.8" y1="479.8" x2="602" y2="472.6" stroke="#8c8c8c" stroke-width="0.6" />
<line x1="392" y1="480.3" x2="603" y2="480.3" stroke="#d0d0d0" stroke-width="1" />
<text x="436.3" y="403.5" font-size="9.0" font-weight="bold" fill="#111" textLength="124.2" lengthAdjust="spacingAndGlyphs" stroke="#111" stroke-width="0.25">Design Deflection Chart</text>
<rect x="419.4" y="408.4" width="179.0" height="45.30000000000001" fill="#ffffff" />
<line x1="427.236" y1="408.4" x2="427.236" y2="453.7" stroke="#dcdcdc" stroke-width="0.6" stroke-dasharray="1.2,1.3"/>
<line x1="435.072" y1="408.4" x2="435.072" y2="453.7" stroke="#dcdcdc" stroke-width="0.6" stroke-dasharray="1.2,1.3"/>
<line x1="442.90799999999996" y1="408.4" x2="442.90799999999996" y2="453.7" stroke="#dcdcdc" stroke-width="0.6" stroke-dasharray="1.2,1.3"/>
<line x1="450.74399999999997" y1="408.4" x2="450.74399999999997" y2="453.7" stroke="#dcdcdc" stroke-width="0.6" stroke-dasharray="1.2,1.3"/>
<line x1="458.58" y1="408.4" x2="458.58" y2="453.7" stroke="#dcdcdc" stroke-width="0.6" stroke-dasharray="1.2,1.3"/>
<line x1="466.416" y1="408.4" x2="466.416" y2="453.7" stroke="#dcdcdc" stroke-width="0.6" stroke-dasharray="1.2,1.3"/>
<line x1="474.25199999999995" y1="408.4" x2="474.25199999999995" y2="453.7" stroke="#dcdcdc" stroke-width="0.6" stroke-dasharray="1.2,1.3"/>
<line x1="482.08799999999997" y1="408.4" x2="482.08799999999997" y2="453.7" stroke="#dcdcdc" stroke-width="0.6" stroke-dasharray="1.2,1.3"/>
<line x1="489.924" y1="408.4" x2="489.924" y2="453.7" stroke="#dcdcdc" stroke-width="0.6" stroke-dasharray="1.2,1.3"/>
<line x1="497.76" y1="408.4" x2="497.76" y2="453.7" stroke="#dcdcdc" stroke-width="0.6" stroke-dasharray="1.2,1.3"/>
<line x1="505.596" y1="408.4" x2="505.596" y2="453.7" stroke="#dcdcdc" stroke-width="0.6" stroke-dasharray="1.2,1.3"/>
<line x1="513.432" y1="408.4" x2="513.432" y2="453.7" stroke="#dcdcdc" stroke-width="0.6" stroke-dasharray="1.2,1.3"/>
<line x1="521.268" y1="408.4" x2="521.268" y2="453.7" stroke="#dcdcdc" stroke-width="0.6" stroke-dasharray="1.2,1.3"/>
<line x1="529.104" y1="408.4" x2="529.104" y2="453.7" stroke="#dcdcdc" stroke-width="0.6" stroke-dasharray="1.2,1.3"/>
<line x1="536.9399999999999" y1="408.4" x2="536.9399999999999" y2="453.7" stroke="#dcdcdc" stroke-width="0.6" stroke-dasharray="1.2,1.3"/>
<line x1="544.776" y1="408.4" x2="544.776" y2="453.7" stroke="#dcdcdc" stroke-width="0.6" stroke-dasharray="1.2,1.3"/>
<line x1="552.612" y1="408.4" x2="552.612" y2="453.7" stroke="#dcdcdc" stroke-width="0.6" stroke-dasharray="1.2,1.3"/>
<line x1="560.448" y1="408.4" x2="560.448" y2="453.7" stroke="#dcdcdc" stroke-width="0.6" stroke-dasharray="1.2,1.3"/>
<line x1="568.284" y1="408.4" x2="568.284" y2="453.7" stroke="#dcdcdc" stroke-width="0.6" stroke-dasharray="1.2,1.3"/>
<line x1="576.12" y1="408.4" x2="576.12" y2="453.7" stroke="#dcdcdc" stroke-width="0.6" stroke-dasharray="1.2,1.3"/>
<line x1="583.956" y1="408.4" x2="583.956" y2="453.7" stroke="#dcdcdc" stroke-width="0.6" stroke-dasharray="1.2,1.3"/>
<line x1="591.7919999999999" y1="408.4" x2="591.7919999999999" y2="453.7" stroke="#dcdcdc" stroke-width="0.6" stroke-dasharray="1.2,1.3"/>
<line x1="419.4" y1="417.625" x2="598.4" y2="417.625" stroke="#d4d4d4" stroke-width="0.6" stroke-dasharray="1.2,1.3"/>
<line x1="419.4" y1="426.84999999999997" x2="598.4" y2="426.84999999999997" stroke="#d4d4d4" stroke-width="0.6" stroke-dasharray="1.2,1.3"/>
<line x1="419.4" y1="436.075" x2="598.4" y2="436.075" stroke="#d4d4d4" stroke-width="0.6" stroke-dasharray="1.2,1.3"/>
<line x1="419.4" y1="445.29999999999995" x2="598.4" y2="445.29999999999995" stroke="#d4d4d4" stroke-width="0.6" stroke-dasharray="1.2,1.3"/>
<rect x="419.4" y="408.4" width="179.0" height="45.30000000000001" fill="none" stroke="#b2b2b2" stroke-width="0.9"/>
<line x1="419.4" y1="454.09999999999997" x2="419.4" y2="455.0" stroke="#e86a6a" stroke-width="1" />
<text x="419.65" y="459.59999999999997" font-size="5.1" text-anchor="middle" fill="#333" stroke="#333" stroke-width="0.05" letter-spacing="0.45">0</text>
<line x1="427.236" y1="454.09999999999997" x2="427.236" y2="455.0" stroke="#e86a6a" stroke-width="1" />
<text x="427.486" y="459.59999999999997" font-size="5.1" text-anchor="middle" fill="#333" stroke="#333" stroke-width="0.05" letter-spacing="0.45">3</text>
<line x1="435.072" y1="454.09999999999997" x2="435.072" y2="455.0" stroke="#e86a6a" stroke-width="1" />
<text x="435.322" y="459.59999999999997" font-size="5.1" text-anchor="middle" fill="#333" stroke="#333" stroke-width="0.05" letter-spacing="0.45">6</text>
<line x1="442.90799999999996" y1="454.09999999999997" x2="442.90799999999996" y2="455.0" stroke="#e86a6a" stroke-width="1" />
<text x="443.15799999999996" y="459.59999999999997" font-size="5.1" text-anchor="middle" fill="#333" stroke="#333" stroke-width="0.05" letter-spacing="0.45">9</text>
<line x1="450.74399999999997" y1="454.09999999999997" x2="450.74399999999997" y2="455.0" stroke="#e86a6a" stroke-width="1" />
<text x="450.99399999999997" y="459.59999999999997" font-size="5.1" text-anchor="middle" fill="#333" stroke="#333" stroke-width="0.05" letter-spacing="0.45">12</text>
<line x1="458.58" y1="454.09999999999997" x2="458.58" y2="455.0" stroke="#e86a6a" stroke-width="1" />
<text x="458.83" y="459.59999999999997" font-size="5.1" text-anchor="middle" fill="#333" stroke="#333" stroke-width="0.05" letter-spacing="0.45">15</text>
<line x1="466.416" y1="454.09999999999997" x2="466.416" y2="455.0" stroke="#e86a6a" stroke-width="1" />
<text x="466.666" y="459.59999999999997" font-size="5.1" text-anchor="middle" fill="#333" stroke="#333" stroke-width="0.05" letter-spacing="0.45">18</text>
<line x1="474.25199999999995" y1="454.09999999999997" x2="474.25199999999995" y2="455.0" stroke="#e86a6a" stroke-width="1" />
<text x="474.50199999999995" y="459.59999999999997" font-size="5.1" text-anchor="middle" fill="#333" stroke="#333" stroke-width="0.05" letter-spacing="0.45">21</text>
<line x1="482.08799999999997" y1="454.09999999999997" x2="482.08799999999997" y2="455.0" stroke="#e86a6a" stroke-width="1" />
<text x="482.33799999999997" y="459.59999999999997" font-size="5.1" text-anchor="middle" fill="#333" stroke="#333" stroke-width="0.05" letter-spacing="0.45">24</text>
<line x1="489.924" y1="454.09999999999997" x2="489.924" y2="455.0" stroke="#e86a6a" stroke-width="1" />
<text x="490.174" y="459.59999999999997" font-size="5.1" text-anchor="middle" fill="#333" stroke="#333" stroke-width="0.05" letter-spacing="0.45">27</text>
<line x1="497.76" y1="454.09999999999997" x2="497.76" y2="455.0" stroke="#e86a6a" stroke-width="1" />
<text x="498.01" y="459.59999999999997" font-size="5.1" text-anchor="middle" fill="#333" stroke="#333" stroke-width="0.05" letter-spacing="0.45">30</text>
<line x1="505.596" y1="454.09999999999997" x2="505.596" y2="455.0" stroke="#e86a6a" stroke-width="1" />
<text x="505.846" y="459.59999999999997" font-size="5.1" text-anchor="middle" fill="#333" stroke="#333" stroke-width="0.05" letter-spacing="0.45">33</text>
<line x1="513.432" y1="454.09999999999997" x2="513.432" y2="455.0" stroke="#e86a6a" stroke-width="1" />
<text x="513.682" y="459.59999999999997" font-size="5.1" text-anchor="middle" fill="#333" stroke="#333" stroke-width="0.05" letter-spacing="0.45">36</text>
<line x1="521.268" y1="454.09999999999997" x2="521.268" y2="455.0" stroke="#e86a6a" stroke-width="1" />
<text x="521.518" y="459.59999999999997" font-size="5.1" text-anchor="middle" fill="#333" stroke="#333" stroke-width="0.05" letter-spacing="0.45">39</text>
<line x1="529.104" y1="454.09999999999997" x2="529.104" y2="455.0" stroke="#e86a6a" stroke-width="1" />
<text x="529.354" y="459.59999999999997" font-size="5.1" text-anchor="middle" fill="#333" stroke="#333" stroke-width="0.05" letter-spacing="0.45">42</text>
<line x1="536.9399999999999" y1="454.09999999999997" x2="536.9399999999999" y2="455.0" stroke="#e86a6a" stroke-width="1" />
<text x="537.1899999999999" y="459.59999999999997" font-size="5.1" text-anchor="middle" fill="#333" stroke="#333" stroke-width="0.05" letter-spacing="0.45">45</text>
<line x1="544.776" y1="454.09999999999997" x2="544.776" y2="455.0" stroke="#e86a6a" stroke-width="1" />
<text x="545.026" y="459.59999999999997" font-size="5.1" text-anchor="middle" fill="#333" stroke="#333" stroke-width="0.05" letter-spacing="0.45">48</text>
<line x1="552.612" y1="454.09999999999997" x2="552.612" y2="455.0" stroke="#e86a6a" stroke-width="1" />
<text x="552.862" y="459.59999999999997" font-size="5.1" text-anchor="middle" fill="#333" stroke="#333" stroke-width="0.05" letter-spacing="0.45">51</text>
<line x1="560.448" y1="454.09999999999997" x2="560.448" y2="455.0" stroke="#e86a6a" stroke-width="1" />
<text x="560.698" y="459.59999999999997" font-size="5.1" text-anchor="middle" fill="#333" stroke="#333" stroke-width="0.05" letter-spacing="0.45">54</text>
<line x1="568.284" y1="454.09999999999997" x2="568.284" y2="455.0" stroke="#e86a6a" stroke-width="1" />
<text x="568.534" y="459.59999999999997" font-size="5.1" text-anchor="middle" fill="#333" stroke="#333" stroke-width="0.05" letter-spacing="0.45">57</text>
<line x1="576.12" y1="454.09999999999997" x2="576.12" y2="455.0" stroke="#e86a6a" stroke-width="1" />
<text x="576.37" y="459.59999999999997" font-size="5.1" text-anchor="middle" fill="#333" stroke="#333" stroke-width="0.05" letter-spacing="0.45">60</text>
<line x1="583.956" y1="454.09999999999997" x2="583.956" y2="455.0" stroke="#e86a6a" stroke-width="1" />
<text x="584.206" y="459.59999999999997" font-size="5.1" text-anchor="middle" fill="#333" stroke="#333" stroke-width="0.05" letter-spacing="0.45">63</text>
<line x1="591.7919999999999" y1="454.09999999999997" x2="591.7919999999999" y2="455.0" stroke="#e86a6a" stroke-width="1" />
<text x="592.0419999999999" y="459.59999999999997" font-size="5.1" text-anchor="middle" fill="#333" stroke="#333" stroke-width="0.05" letter-spacing="0.45">66</text>
<line x1="418.09999999999997" y1="408.4" x2="419.0" y2="408.4" stroke="#e86a6a" stroke-width="1" />
<text x="416.9" y="410.4" font-size="5.1" text-anchor="end" fill="#333" stroke="#333" stroke-width="0.05" letter-spacing="0.45">0</text>
<line x1="418.09999999999997" y1="417.625" x2="419.0" y2="417.625" stroke="#e86a6a" stroke-width="1" />
<text x="416.9" y="419.625" font-size="5.1" text-anchor="end" fill="#333" stroke="#333" stroke-width="0.05" letter-spacing="0.45">5</text>
<line x1="418.09999999999997" y1="426.84999999999997" x2="419.0" y2="426.84999999999997" stroke="#e86a6a" stroke-width="1" />
<text x="416.9" y="428.84999999999997" font-size="5.1" text-anchor="end" fill="#333" stroke="#333" stroke-width="0.05" letter-spacing="0.45">10</text>
<line x1="418.09999999999997" y1="436.075" x2="419.0" y2="436.075" stroke="#e86a6a" stroke-width="1" />
<text x="416.9" y="438.075" font-size="5.1" text-anchor="end" fill="#333" stroke="#333" stroke-width="0.05" letter-spacing="0.45">15</text>
<line x1="418.09999999999997" y1="445.29999999999995" x2="419.0" y2="445.29999999999995" stroke="#e86a6a" stroke-width="1" />
<text x="416.9" y="447.29999999999995" font-size="5.1" text-anchor="end" fill="#333" stroke="#333" stroke-width="0.05" letter-spacing="0.45">20</text>
<polyline points="445.40,407.99 449.09,408.34 452.79,408.70 456.48,409.07 460.18,409.46 463.87,409.86 467.57,410.27 471.26,410.71 474.96,411.17 478.65,411.65 482.35,412.16 486.04,412.71 489.74,413.28 493.43,413.90 497.13,414.55 500.82,415.24 504.52,415.98 508.21,416.76 511.91,417.59 515.60,418.48 519.30,419.42 522.99,420.41 526.69,421.47 530.38,422.59 534.08,423.77 537.77,425.02 541.47,426.34 545.16,427.74 548.86,429.21 552.55,430.76 556.25,432.39 559.94,434.10 563.64,435.90 567.33,437.79 571.03,439.77 574.72,441.85 578.42,444.02 582.11,446.29 585.81,448.66 589.50,451.14" fill="none" stroke="#ff6262" stroke-width="0.95" stroke-linejoin="round"/>
<text x="405.3" y="430.8" font-size="7.2" fill="#222" stroke="#222" stroke-width="0.1" text-anchor="middle" transform="rotate(-90 405.3 430.8)" textLength="40.3" lengthAdjust="spacingAndGlyphs">Deflected inches</text>
<text x="472.3" y="467.3" font-size="5.8" fill="#222" textLength="72.7" lengthAdjust="spacingAndGlyphs" stroke="#222" stroke-width="0.3">Inches from top of grip</text>
<rect x="468.2" y="472.4" width="59.3" height="7" fill="#ffffff" stroke="#a8a8a8" stroke-width="0.7" />
<rect x="470.2" y="473.79999999999995" width="5.2" height="3.9" fill="#ff0000" />
<text x="476.8" y="477.5" font-size="5.4" fill="#222" textLength="46.5" lengthAdjust="spacingAndGlyphs" stroke="#222" stroke-width="0.08">Sample 5wt taper</text>
<rect x="151" y="170.3" width="264.3" height="225.5" fill="#000" opacity="0.55" filter="url(#blur8)"/>
<rect x="152" y="168.8" width="262.3" height="224.5" fill="#ececec" />
<rect x="152" y="168.8" width="262.3" height="12" fill="url(#tbA)" />
<line x1="152" y1="181.10000000000002" x2="414.3" y2="181.10000000000002" stroke="#8e8e8e" stroke-width="1" />
<line x1="152" y1="182.5" x2="414.3" y2="182.5" stroke="#ffffff" stroke-width="1" />
<line x1="152.5" y1="182" x2="152.5" y2="393.3" stroke="#fafafa" stroke-width="1" />
<circle cx="160.1" cy="174.9" r="3.9" fill="url(#tlA)" stroke="#7d838c" stroke-width="0.8"/>
<circle cx="171.7" cy="174.9" r="3.9" fill="url(#tl)" stroke="#a4a4a4" stroke-width="0.8"/>
<circle cx="183.3" cy="174.9" r="3.9" fill="url(#tl)" stroke="#a4a4a4" stroke-width="0.8"/>
<text x="254.4" y="177.9" font-size="8.3" fill="#222" textLength="56" lengthAdjust="spacingAndGlyphs"  stroke="#222" stroke-width="0.2">Powell &#39;A&#39; Taper</text>
<line x1="155" y1="185.5" x2="404.5" y2="185.5" stroke="#ffffff" stroke-width="1" />
<line x1="155.5" y1="185" x2="155.5" y2="367" stroke="#ffffff" stroke-width="1" />
<line x1="404.5" y1="185" x2="404.5" y2="367" stroke="#9a9a9a" stroke-width="1" />
<line x1="155" y1="366.8" x2="405" y2="366.8" stroke="#9a9a9a" stroke-width="1" />
<line x1="405.6" y1="185" x2="405.6" y2="368" stroke="#f8f8f8" stroke-width="1" />
<line x1="155" y1="367.9" x2="406" y2="367.9" stroke="#f8f8f8" stroke-width="1" />
<text x="266.8" y="193.8" font-size="8.3" fill="#222" textLength="59.4" lengthAdjust="spacingAndGlyphs"  stroke="#222" stroke-width="0.2">Taper Parameters</text>
<text x="159.5" y="214.8" font-size="8.3" fill="#1a1a1a" textLength="43.5" lengthAdjust="spacingAndGlyphs"  stroke="#1a1a1a" stroke-width="0.2">Tip diameter</text>
<rect x="215.3" y="205.3" width="27" height="12.3" fill="#d9e7fa" />
<line x1="215.3" y1="205.8" x2="242.3" y2="205.8" stroke="#a8a8a8" stroke-width="1" />
<line x1="215.8" y1="205.3" x2="215.8" y2="217.60000000000002" stroke="#c4c4c4" stroke-width="1" />
<line x1="241.8" y1="205.3" x2="241.8" y2="217.60000000000002" stroke="#d8d8d8" stroke-width="1" />
<line x1="215.3" y1="217.10000000000002" x2="242.3" y2="217.10000000000002" stroke="#e4e4e4" stroke-width="1" />
<text x="217.5" y="214.8" font-size="8.3" fill="#111" textLength="15.5" lengthAdjust="spacingAndGlyphs"  stroke="#111" stroke-width="0.2">.062</text>
<text x="159.5" y="234" font-size="8.3" fill="#1a1a1a" textLength="50" lengthAdjust="spacingAndGlyphs"  stroke="#1a1a1a" stroke-width="0.2">Powell Taper #</text>
<rect x="215.3" y="224.4" width="27" height="12.3" fill="#d9e7fa" />
<line x1="215.3" y1="224.9" x2="242.3" y2="224.9" stroke="#a8a8a8" stroke-width="1" />
<line x1="215.8" y1="224.4" x2="215.8" y2="236.70000000000002" stroke="#c4c4c4" stroke-width="1" />
<line x1="241.8" y1="224.4" x2="241.8" y2="236.70000000000002" stroke="#d8d8d8" stroke-width="1" />
<line x1="215.3" y1="236.20000000000002" x2="242.3" y2="236.20000000000002" stroke="#e4e4e4" stroke-width="1" />
<text x="217.5" y="233.8" font-size="8.3" fill="#111" textLength="12" lengthAdjust="spacingAndGlyphs"  stroke="#111" stroke-width="0.2">9.0</text>
<text x="266.8" y="234" font-size="8.3" fill="#1a1a1a" textLength="56.8" lengthAdjust="spacingAndGlyphs"  stroke="#1a1a1a" stroke-width="0.2">Rise Adjustment</text>
<rect x="329" y="224.4" width="29" height="12.3" fill="#d9e7fa" />
<line x1="329" y1="224.9" x2="358" y2="224.9" stroke="#a8a8a8" stroke-width="1" />
<line x1="329.5" y1="224.4" x2="329.5" y2="236.70000000000002" stroke="#c4c4c4" stroke-width="1" />
<line x1="357.5" y1="224.4" x2="357.5" y2="236.70000000000002" stroke="#d8d8d8" stroke-width="1" />
<line x1="329" y1="236.20000000000002" x2="358" y2="236.20000000000002" stroke="#e4e4e4" stroke-width="1" />
<text x="331" y="233.8" font-size="8.3" fill="#111" textLength="12.5" lengthAdjust="spacingAndGlyphs"  stroke="#111" stroke-width="0.2">1/5</text>
<text x="159.5" y="261.6" font-size="8.3" fill="#1a1a1a" textLength="18" lengthAdjust="spacingAndGlyphs"  stroke="#1a1a1a" stroke-width="0.2">From</text>
<rect x="215.3" y="250.3" width="27" height="12.3" fill="#d9e7fa" />
<line x1="215.3" y1="250.8" x2="242.3" y2="250.8" stroke="#a8a8a8" stroke-width="1" />
<line x1="215.8" y1="250.3" x2="215.8" y2="262.6" stroke="#c4c4c4" stroke-width="1" />
<line x1="241.8" y1="250.3" x2="241.8" y2="262.6" stroke="#d8d8d8" stroke-width="1" />
<line x1="215.3" y1="262.1" x2="242.3" y2="262.1" stroke="#e4e4e4" stroke-width="1" />
<text x="217.5" y="259.8" font-size="8.3" fill="#111" textLength="4.5" lengthAdjust="spacingAndGlyphs"  stroke="#111" stroke-width="0.2">1</text>
<text x="266.8" y="259.6" font-size="8.3" fill="#1a1a1a" textLength="8.5" lengthAdjust="spacingAndGlyphs"  stroke="#1a1a1a" stroke-width="0.2">To</text>
<rect x="329" y="250.3" width="29" height="12.3" fill="#d9e7fa" />
<line x1="329" y1="250.8" x2="358" y2="250.8" stroke="#a8a8a8" stroke-width="1" />
<line x1="329.5" y1="250.3" x2="329.5" y2="262.6" stroke="#c4c4c4" stroke-width="1" />
<line x1="357.5" y1="250.3" x2="357.5" y2="262.6" stroke="#d8d8d8" stroke-width="1" />
<line x1="329" y1="262.1" x2="358" y2="262.1" stroke="#e4e4e4" stroke-width="1" />
<text x="331" y="259.8" font-size="8.3" fill="#111" textLength="9" lengthAdjust="spacingAndGlyphs"  stroke="#111" stroke-width="0.2">72</text>
<rect x="158.5" y="273.5" width="232.5" height="90" fill="none" stroke="#ffffff" stroke-width="1"/>
<rect x="159.5" y="274.5" width="230.5" height="88" fill="none" stroke="#606060" stroke-width="1"/>
<text x="259" y="283" font-size="8.3" fill="#222" textLength="46.5" lengthAdjust="spacingAndGlyphs"  stroke="#222" stroke-width="0.2">Taper Metrics</text>
<text x="163.7" y="296.8" font-size="8.3" fill="#1a1a1a" textLength="38" lengthAdjust="spacingAndGlyphs"  stroke="#1a1a1a" stroke-width="0.2">Rod length</text>
<rect x="213.6" y="288" width="25.2" height="11.7" fill="#ececec" />
<line x1="213.6" y1="288.5" x2="238.79999999999998" y2="288.5" stroke="#cfcfcf" stroke-width="1" />
<line x1="214.1" y1="288" x2="214.1" y2="299.7" stroke="#dadada" stroke-width="1" />
<line x1="238.29999999999998" y1="288" x2="238.29999999999998" y2="299.7" stroke="#e2e2e2" stroke-width="1" />
<line x1="213.6" y1="299.2" x2="238.79999999999998" y2="299.2" stroke="#e8e8e8" stroke-width="1" />
<text x="215.5" y="297" font-size="8.3" fill="#111" textLength="9" lengthAdjust="spacingAndGlyphs"  stroke="#111" stroke-width="0.2">72</text>
<text x="163.7" y="315.9" font-size="8.3" fill="#1a1a1a" textLength="77" lengthAdjust="spacingAndGlyphs"  stroke="#1a1a1a" stroke-width="0.2">Calculated Slope/Inch</text>
<rect x="258.8" y="307.4" width="45.3" height="11.4" fill="#ececec" />
<line x1="258.8" y1="307.9" x2="304.1" y2="307.9" stroke="#cfcfcf" stroke-width="1" />
<line x1="259.3" y1="307.4" x2="259.3" y2="318.79999999999995" stroke="#dadada" stroke-width="1" />
<line x1="303.6" y1="307.4" x2="303.6" y2="318.79999999999995" stroke="#e2e2e2" stroke-width="1" />
<line x1="258.8" y1="318.29999999999995" x2="304.1" y2="318.29999999999995" stroke="#e8e8e8" stroke-width="1" />
<text x="261.5" y="315.9" font-size="8.3" fill="#111" textLength="24" lengthAdjust="spacingAndGlyphs"  stroke="#111" stroke-width="0.2">0.00338</text>
<text x="163.7" y="334.9" font-size="8.3" fill="#1a1a1a" textLength="90" lengthAdjust="spacingAndGlyphs"  stroke="#1a1a1a" stroke-width="0.2">Calculated Slope/Position</text>
<rect x="258.8" y="326.4" width="45.3" height="11.4" fill="#ececec" />
<line x1="258.8" y1="326.9" x2="304.1" y2="326.9" stroke="#cfcfcf" stroke-width="1" />
<line x1="259.3" y1="326.4" x2="259.3" y2="337.79999999999995" stroke="#dadada" stroke-width="1" />
<line x1="303.6" y1="326.4" x2="303.6" y2="337.79999999999995" stroke="#e2e2e2" stroke-width="1" />
<line x1="258.8" y1="337.29999999999995" x2="304.1" y2="337.29999999999995" stroke="#e8e8e8" stroke-width="1" />
<text x="261.5" y="334.9" font-size="8.3" fill="#111" textLength="28.5" lengthAdjust="spacingAndGlyphs"  stroke="#111" stroke-width="0.2">0.020281</text>
<text x="163.7" y="354.09999999999997" font-size="8.3" fill="#1a1a1a" textLength="77.7" lengthAdjust="spacingAndGlyphs"  stroke="#1a1a1a" stroke-width="0.2">Calculated Slope/Foot</text>
<rect x="258.8" y="345.59999999999997" width="45.3" height="11.4" fill="#ececec" />
<line x1="258.8" y1="346.09999999999997" x2="304.1" y2="346.09999999999997" stroke="#cfcfcf" stroke-width="1" />
<line x1="259.3" y1="345.59999999999997" x2="259.3" y2="356.99999999999994" stroke="#dadada" stroke-width="1" />
<line x1="303.6" y1="345.59999999999997" x2="303.6" y2="356.99999999999994" stroke="#e2e2e2" stroke-width="1" />
<line x1="258.8" y1="356.49999999999994" x2="304.1" y2="356.49999999999994" stroke="#e8e8e8" stroke-width="1" />
<text x="261.5" y="354.09999999999997" font-size="8.3" fill="#111" textLength="28.5" lengthAdjust="spacingAndGlyphs"  stroke="#111" stroke-width="0.2">0.040562</text>
<rect x="172.3" y="375.3" width="51.7" height="12.4" rx="6.2" fill="url(#btn)" stroke="#5a6a88" stroke-width="1.6"/>
<text x="198.15" y="384.7" font-size="8.3" text-anchor="middle" fill="#111" textLength="33" lengthAdjust="spacingAndGlyphs"  stroke="#111" stroke-width="0.2">Calculate</text>
<rect x="233.5" y="375.3" width="53" height="12.4" rx="6.2" fill="url(#btn)" stroke="#6e6e6e" stroke-width="1"/>
<text x="260.0" y="384.7" font-size="8.3" text-anchor="middle" fill="#111" textLength="19" lengthAdjust="spacingAndGlyphs"  stroke="#111" stroke-width="0.2">Apply</text>
<rect x="296.3" y="375.3" width="53.8" height="12.4" rx="6.2" fill="url(#btn)" stroke="#6e6e6e" stroke-width="1"/>
<text x="323.2" y="384.7" font-size="8.3" text-anchor="middle" fill="#111" textLength="23" lengthAdjust="spacingAndGlyphs"  stroke="#111" stroke-width="0.2">Cancel</text>
<rect x="359.3" y="375.3" width="44.7" height="12.4" rx="6.2" fill="url(#btn)" stroke="#6e6e6e" stroke-width="1"/>
<text x="381.65000000000003" y="384.7" font-size="8.3" text-anchor="middle" fill="#111" textLength="27" lengthAdjust="spacingAndGlyphs"  stroke="#111" stroke-width="0.2">Default</text>
</svg></body></html>
